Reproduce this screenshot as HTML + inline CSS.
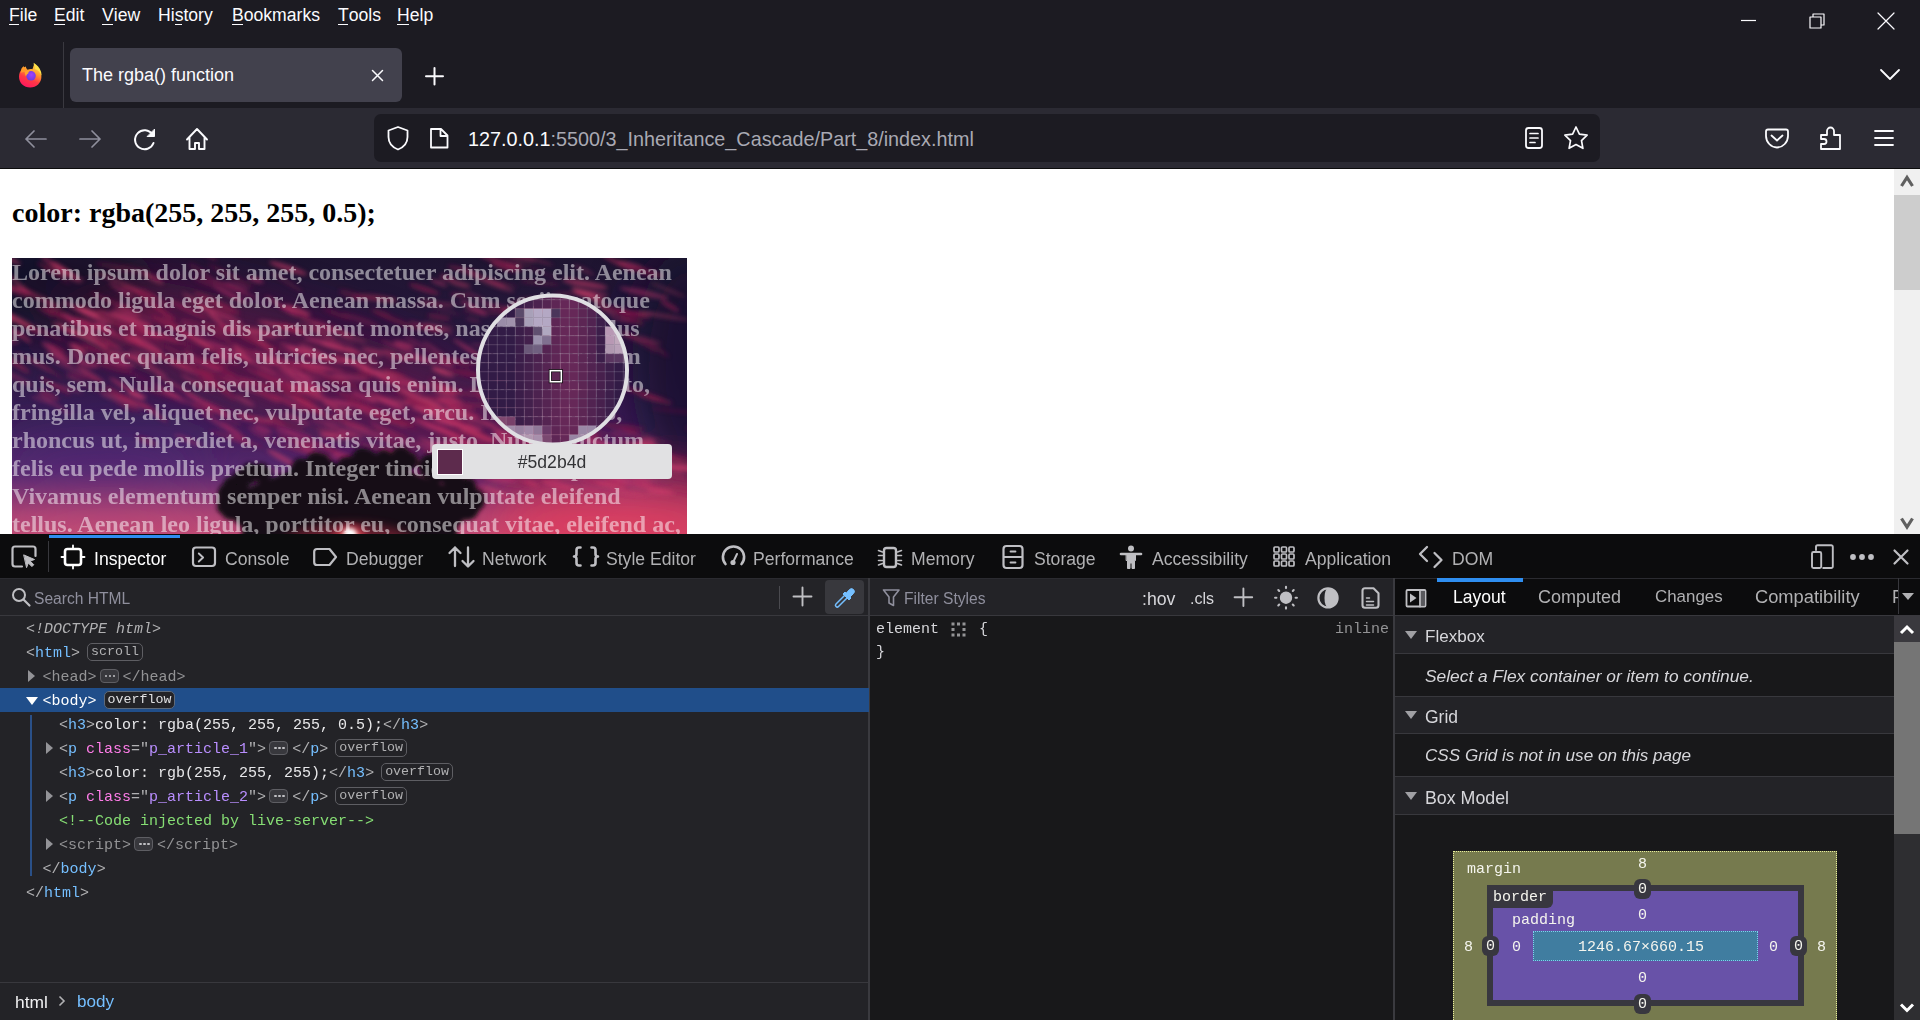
<!DOCTYPE html>
<html><head><meta charset="utf-8">
<style>
*{box-sizing:border-box;margin:0;padding:0}
html,body{width:1920px;height:1020px;overflow:hidden;background:#1c1b22;font-family:"Liberation Sans",sans-serif}
.a{position:absolute}
svg{position:absolute;overflow:visible}
.menu span{position:absolute;top:4px;font-size:17.6px;color:#fbfbfe;line-height:22px}
.menu u{text-decoration:none;position:relative}
.menu u:after{content:"";position:absolute;left:0;right:1px;top:18.5px;height:1px;background:#fbfbfe}
.tabs span{position:absolute;top:548px;font-size:17.6px;line-height:22px;color:#b1b1b3;white-space:nowrap}
.mk{position:absolute;font-family:"Liberation Mono",monospace;font-size:15px;line-height:24px;color:#b1b1b3;white-space:pre}
.tg{color:#75bfff}.at{color:#ff7de9}.av{color:#b98eff}.cm{color:#86de74}.dim{color:#939395}
.bdg{display:inline-block;position:relative;top:-1px;font-size:13.3px;line-height:16px;padding:0 3px;border:1px solid #5e5e63;border-radius:5px;background:#232327;color:#b1b1b3;margin-left:7px;vertical-align:middle}
.ell{display:inline-block;position:relative;width:19px;height:14px;border:1px solid #5e5e63;background:#38383d;border-radius:4px;vertical-align:middle;top:-1px;margin:0 4px 0 3px}
.ell:before{content:"";position:absolute;left:4px;top:4.5px;width:2.5px;height:2.5px;border-radius:50%;background:#c0c0c4;box-shadow:4px 0 0 #c0c0c4,8px 0 0 #c0c0c4}
.tri{position:absolute;width:0;height:0;border-top:6.5px solid transparent;border-bottom:6.5px solid transparent;border-left:7.5px solid #939397}
.trid{position:absolute;width:0;height:0;border-left:6px solid transparent;border-right:6px solid transparent;border-top:8px solid #fff}
.sec{left:1395px;width:499px;background:#232327}
.bm{position:absolute;font-family:"Liberation Mono",monospace;font-size:15px;line-height:22px;color:#f5f5ee;white-space:pre}
.bmb{position:absolute;font-family:"Liberation Mono",monospace;font-size:15px;line-height:22px;height:20px;overflow:hidden;color:#f5f5ee;background:#38373f;border-radius:6px;width:17px;text-align:center}
.mono{font-family:"Liberation Mono",monospace}
</style></head><body>
<!-- menu bar -->
<div class="a" style="left:0;top:0;width:1920px;height:108px;background:#1c1b22"></div>
<svg style="left:14px;top:59px" width="32" height="32" viewBox="0 0 32 32">
 <defs>
  <linearGradient id="ffr" x1="0.35" y1="1" x2="0.75" y2="0.05"><stop offset="0" stop-color="#ff1660"/><stop offset="0.35" stop-color="#ff3a44"/><stop offset="0.65" stop-color="#ff9a30"/><stop offset="1" stop-color="#ffe14a"/></linearGradient>
  <radialGradient id="ffp" cx="0.55" cy="0.4" r="0.6"><stop offset="0" stop-color="#a040ff"/><stop offset="1" stop-color="#6a3ce0"/></radialGradient>
 </defs>
 <path d="M16.2 6.5c-6.2 0-11.2 5-11.2 11.2s5 10.8 11.2 10.8s11.2-4.8 11.2-10.8c0-3.5-1.4-6.6-3.7-8.7c-1-2-2.3-3.5-4.3-5.2c0.3 1.5 0.2 2.6-0.2 3.3c-1-0.4-2-0.6-3-0.6z" fill="url(#ffr)"/>
 <path d="M19.5 3.8c3.5 2 6.4 5.2 7.6 9.2c0.4 1.3 0.4 2.6 0.3 3.8c-1-3.2-3.3-5.8-6.4-6.8c0.5-2.2-0.2-4.3-1.5-6.2z" fill="#ffe24a"/>
 <path d="M7.5 9.5c0.8-1.2 1.6-2 2.4-2.3c0 1 0.4 1.8 1.1 2.4c1.2-0.3 2.4-0.2 3.4 0.2c-2 0.8-3 2-3.4 3.4c-1.5-0.2-2.8 0-3.8 0.5c-0.3-1.4-0.2-2.9 0.3-4.2z" fill="#ff9a2a"/>
 <path d="M11.5 4.5L19.2 3.6c0.6 2 0.6 4.2-0.8 6.6c-1.6-0.3-3.4-0.2-4.8 0.6c-0.6-0.6-1.3-1.4-1.6-2.4z" fill="#1c1b22"/>
 <circle cx="17" cy="16.8" r="4.8" fill="url(#ffp)"/>
 <path d="M10.8 12.5c1.5-1.2 3.6-1.6 5.5-1.1c-1.4 0.8-2 1.8-2 3c-1.3 0.5-2 1.5-2.2 3c-0.8-1.2-1.4-3-1.3-4.9z" fill="#ffa52e"/>
</svg>
<div class="menu">
<span style="left:9px"><u>F</u>ile</span>
<span style="left:54px"><u>E</u>dit</span>
<span style="left:102px"><u>V</u>iew</span>
<span style="left:158px">Hi<u>s</u>tory</span>
<span style="left:232px"><u>B</u>ookmarks</span>
<span style="left:338px"><u>T</u>ools</span>
<span style="left:397px"><u>H</u>elp</span>
</div>
<!-- nav bar -->
<div class="a" style="left:0;top:108px;width:1920px;height:60px;background:#2b2a33"></div>
<div class="a" style="left:0;top:168px;width:1920px;height:1px;background:#0c0c0d"></div>
<!-- url field -->
<div class="a" style="left:374px;top:114px;width:1226px;height:48px;background:#1c1b22;border-radius:7px"></div>
<!-- tab -->
<div class="a" style="left:63px;top:42px;width:1px;height:66px;background:#3a3940"></div>
<div class="a" style="left:70px;top:48px;width:332px;height:54px;background:#42414d;border-radius:6px"></div>
<div class="a" style="left:82px;top:64px;font-size:18px;color:#fbfbfe;line-height:22px">The rgba() function</div>
<svg style="left:0;top:0" width="1920" height="168" fill="none" stroke="#fbfbfe" stroke-width="1.6" stroke-linecap="round" stroke-linejoin="round">
 <!-- tab close -->
 <path d="M372.5 70.5L382.5 80.5M382.5 70.5L372.5 80.5" stroke-width="1.5"/>
 <!-- new tab plus -->
 <path d="M434.5 68v16.5M426 76.2h17" stroke-width="2"/>
 <!-- window controls -->
 <path d="M1741 20.5h15" stroke-width="1.2" stroke-linecap="butt"/>
 <path d="M1810 17h11v11h-11zM1813 17v-3h11v11h-3" stroke-width="1.2" stroke-linecap="butt"/>
 <path d="M1878 13l16 16M1894 13l-16 16" stroke-width="1.2"/>
 <!-- tab overflow chevron -->
 <path d="M1881 70l9 9l9-9" stroke-width="1.8"/>
 <!-- back / forward -->
 <path d="M46 139H26M34 131l-8 8l8 8" stroke="#8f8f9d" stroke-width="1.7"/>
 <path d="M80 139h20M92 131l8 8l-8 8" stroke="#8f8f9d" stroke-width="1.7"/>
 <!-- reload -->
 <path d="M152.5 134.5A9.5 9.5 0 1 0 153.5 143" stroke-width="2"/>
 <path d="M154.5 129.5v7h-7z" fill="#fbfbfe" stroke-width="1"/>
 <!-- home -->
 <path d="M187 139.5L197 129l10 10.5M189.5 137v12h5.5v-6h4v6h5.5v-12" stroke-width="1.9"/>
 <!-- shield -->
 <path d="M398 127l9.5 3.5v6.5c0 6.5-4.5 10.5-9.5 12.5c-5-2-9.5-6-9.5-12.5v-6.5z" stroke-width="1.8"/>
 <!-- page icon -->
 <path d="M431 129h10l6.5 6.5v12h-16.5zM440.5 129v7h7" stroke-width="1.8"/>
 <!-- reader -->
 <rect x="1526" y="128" width="16" height="20" rx="2.5" stroke-width="1.8"/><path d="M1530 133.5h8M1530 138h8M1530 142.5h5" stroke-width="1.7"/>
 <!-- star -->
 <path d="M1576 127l3.4 7.2l7.7 1l-5.6 5.4l1.4 7.7l-6.9-3.8l-6.9 3.8l1.4-7.7l-5.6-5.4l7.7-1z" stroke-width="1.7"/>
 <!-- pocket -->
 <path d="M1766 131.5q0-2 2-2h18q2 0 2 2v4.5c0 6-5 11.5-11 11.5s-11-5.5-11-11.5z" stroke-width="1.8"/>
 <path d="M1771.5 135.5l5.5 5l5.5-5" stroke-width="1.8"/>
 <!-- extensions -->
 <path d="M1821 135h6v-4a3.5 3.5 0 0 1 7 0v4h6v14h-19v-5h3a2.5 2.5 0 0 0 0-5h-3z" stroke-width="1.8"/>
 <!-- hamburger -->
 <path d="M1875 131h18M1875 138h18M1875 145h18" stroke-width="1.8"/>
</svg>
<div class="a" style="left:468px;top:127px;font-size:19.8px;line-height:24px;color:#fbfbfe;white-space:nowrap">127.0.0.1<span style="color:#a9a9b3">:5500/3_Inheritance_Cascade/Part_8/index.html</span></div>
<!-- page -->
<div class="a" style="left:0;top:169px;width:1894px;height:365px;background:#fff;overflow:hidden" id="page">
<div class="a" style="left:12px;top:28px;font-family:'Liberation Serif',serif;font-weight:bold;font-size:28px;line-height:32px;color:#000;white-space:nowrap">color: rgba(255, 255, 255, 0.5);</div>
<div class="a" id="photo" style="left:12px;top:89px;width:675px;height:300px;overflow:hidden;background:#3a1d50">
<svg width="675" height="300" style="left:0;top:0">
 <defs>
  <linearGradient id="sky" x1="0" y1="0" x2="0" y2="1">
   <stop offset="0" stop-color="#1e1430"/>
   <stop offset="0.3" stop-color="#2a1840"/>
   <stop offset="0.55" stop-color="#3a1f58"/>
   <stop offset="0.72" stop-color="#5a2a70"/>
   <stop offset="0.86" stop-color="#a84274"/>
   <stop offset="1" stop-color="#d25272"/>
  </linearGradient>
  <filter id="bl5" x="-50%" y="-50%" width="200%" height="200%"><feGaussianBlur stdDeviation="5"/></filter>
  <filter id="bl3" x="-50%" y="-50%" width="200%" height="200%"><feGaussianBlur stdDeviation="3"/></filter>
  <filter id="bl2" x="-50%" y="-50%" width="200%" height="200%"><feGaussianBlur stdDeviation="2"/></filter>
  <filter id="bl20" x="-50%" y="-50%" width="200%" height="200%"><feGaussianBlur stdDeviation="25"/></filter>
  <radialGradient id="sun"><stop offset="0" stop-color="#fff"/><stop offset="0.2" stop-color="#ffe8d0"/><stop offset="0.5" stop-color="#ff6060" stop-opacity="0.7"/><stop offset="1" stop-color="#e03050" stop-opacity="0"/></radialGradient>
 </defs>
 <rect width="675" height="300" fill="url(#sky)"/>
 <g filter="url(#bl20)">
  <ellipse cx="300" cy="120" rx="300" ry="55" fill="#6a1848" opacity="0.6" transform="rotate(18 300 120)"/>
  <ellipse cx="680" cy="110" rx="60" ry="120" fill="#161230" opacity="0.85"/>
  <ellipse cx="20" cy="20" rx="120" ry="50" fill="#140e26" opacity="0.8"/>
  <ellipse cx="90" cy="205" rx="110" ry="28" fill="#4a2a7a" opacity="0.55"/>
  <ellipse cx="600" cy="268" rx="130" ry="38" fill="#e43c5c" opacity="0.85"/>
  <ellipse cx="100" cy="275" rx="120" ry="25" fill="#d05078" opacity="0.5"/>
 </g>
 <g filter="url(#bl2)"><ellipse cx="142" cy="47" rx="26" ry="2.7" fill="#9a1e50" opacity="0.57" transform="rotate(38 142 47)"/><ellipse cx="370" cy="160" rx="27" ry="1.4" fill="#e0446e" opacity="0.52" transform="rotate(20 370 160)"/><ellipse cx="687" cy="209" rx="23" ry="1.6" fill="#d03a6a" opacity="0.43" transform="rotate(12 687 209)"/><ellipse cx="257" cy="74" rx="19" ry="1.9" fill="#d03a6a" opacity="0.41" transform="rotate(14 257 74)"/><ellipse cx="205" cy="109" rx="22" ry="3.5" fill="#9a1e50" opacity="0.41" transform="rotate(27 205 109)"/><ellipse cx="377" cy="173" rx="20" ry="2.5" fill="#8a1848" opacity="0.28" transform="rotate(16 377 173)"/><ellipse cx="99" cy="95" rx="21" ry="1.8" fill="#b02858" opacity="0.57" transform="rotate(36 99 95)"/><ellipse cx="407" cy="206" rx="16" ry="1.8" fill="#b02858" opacity="0.30" transform="rotate(21 407 206)"/><ellipse cx="328" cy="195" rx="16" ry="1.7" fill="#9a1e50" opacity="0.54" transform="rotate(21 328 195)"/><ellipse cx="448" cy="26" rx="11" ry="2.7" fill="#e0446e" opacity="0.40" transform="rotate(15 448 26)"/><ellipse cx="675" cy="210" rx="11" ry="2.1" fill="#d03a6a" opacity="0.40" transform="rotate(10 675 210)"/><ellipse cx="166" cy="70" rx="22" ry="3.0" fill="#b02858" opacity="0.29" transform="rotate(33 166 70)"/><ellipse cx="40" cy="13" rx="17" ry="1.6" fill="#9a1e50" opacity="0.46" transform="rotate(27 40 13)"/><ellipse cx="64" cy="122" rx="11" ry="1.7" fill="#d03a6a" opacity="0.31" transform="rotate(23 64 122)"/><ellipse cx="521" cy="175" rx="18" ry="2.9" fill="#9a1e50" opacity="0.51" transform="rotate(16 521 175)"/><ellipse cx="-24" cy="104" rx="22" ry="1.9" fill="#e0446e" opacity="0.45" transform="rotate(31 -24 104)"/><ellipse cx="522" cy="50" rx="24" ry="3.1" fill="#d03a6a" opacity="0.56" transform="rotate(11 522 50)"/><ellipse cx="514" cy="227" rx="22" ry="2.5" fill="#8a1848" opacity="0.30" transform="rotate(-5 514 227)"/><ellipse cx="426" cy="70" rx="16" ry="3.2" fill="#e0446e" opacity="0.26" transform="rotate(20 426 70)"/><ellipse cx="573" cy="176" rx="21" ry="2.3" fill="#8a1848" opacity="0.41" transform="rotate(14 573 176)"/><ellipse cx="618" cy="7" rx="14" ry="2.6" fill="#d03a6a" opacity="0.49" transform="rotate(14 618 7)"/><ellipse cx="330" cy="145" rx="10" ry="2.4" fill="#d03a6a" opacity="0.37" transform="rotate(19 330 145)"/><ellipse cx="438" cy="142" rx="13" ry="2.4" fill="#d03a6a" opacity="0.37" transform="rotate(8 438 142)"/><ellipse cx="201" cy="86" rx="19" ry="1.5" fill="#c0346a" opacity="0.45" transform="rotate(17 201 86)"/><ellipse cx="110" cy="10" rx="27" ry="3.3" fill="#8a1848" opacity="0.31" transform="rotate(10 110 10)"/><ellipse cx="427" cy="59" rx="12" ry="3.4" fill="#9a1e50" opacity="0.36" transform="rotate(10 427 59)"/><ellipse cx="436" cy="204" rx="9" ry="2.6" fill="#d03a6a" opacity="0.45" transform="rotate(22 436 204)"/><ellipse cx="488" cy="49" rx="14" ry="2.3" fill="#9a1e50" opacity="0.37" transform="rotate(14 488 49)"/><ellipse cx="268" cy="125" rx="27" ry="3.2" fill="#9a1e50" opacity="0.46" transform="rotate(27 268 125)"/><ellipse cx="338" cy="119" rx="18" ry="2.8" fill="#e0446e" opacity="0.35" transform="rotate(8 338 119)"/><ellipse cx="170" cy="77" rx="9" ry="1.4" fill="#8a1848" opacity="0.27" transform="rotate(15 170 77)"/><ellipse cx="90" cy="133" rx="24" ry="2.2" fill="#9a1e50" opacity="0.28" transform="rotate(17 90 133)"/><ellipse cx="481" cy="168" rx="12" ry="1.4" fill="#c0346a" opacity="0.45" transform="rotate(29 481 168)"/><ellipse cx="438" cy="147" rx="15" ry="2.4" fill="#d03a6a" opacity="0.51" transform="rotate(25 438 147)"/><ellipse cx="545" cy="211" rx="16" ry="3.4" fill="#e0446e" opacity="0.51" transform="rotate(31 545 211)"/><ellipse cx="-22" cy="76" rx="20" ry="3.0" fill="#e0446e" opacity="0.49" transform="rotate(20 -22 76)"/><ellipse cx="182" cy="100" rx="13" ry="2.6" fill="#c0346a" opacity="0.42" transform="rotate(40 182 100)"/><ellipse cx="573" cy="79" rx="20" ry="1.4" fill="#e0446e" opacity="0.49" transform="rotate(23 573 79)"/><ellipse cx="519" cy="42" rx="14" ry="1.7" fill="#e0446e" opacity="0.38" transform="rotate(-2 519 42)"/><ellipse cx="444" cy="179" rx="21" ry="1.9" fill="#d03a6a" opacity="0.52" transform="rotate(34 444 179)"/><ellipse cx="134" cy="107" rx="24" ry="2.0" fill="#d03a6a" opacity="0.51" transform="rotate(29 134 107)"/><ellipse cx="249" cy="86" rx="21" ry="2.6" fill="#8a1848" opacity="0.52" transform="rotate(20 249 86)"/><ellipse cx="309" cy="109" rx="21" ry="1.4" fill="#b02858" opacity="0.41" transform="rotate(11 309 109)"/><ellipse cx="312" cy="85" rx="20" ry="2.8" fill="#c0346a" opacity="0.50" transform="rotate(18 312 85)"/><ellipse cx="557" cy="217" rx="10" ry="2.0" fill="#e0446e" opacity="0.28" transform="rotate(24 557 217)"/><ellipse cx="526" cy="219" rx="20" ry="2.7" fill="#8a1848" opacity="0.31" transform="rotate(4 526 219)"/><ellipse cx="338" cy="165" rx="21" ry="2.1" fill="#b02858" opacity="0.53" transform="rotate(19 338 165)"/><ellipse cx="376" cy="96" rx="27" ry="1.6" fill="#d03a6a" opacity="0.50" transform="rotate(14 376 96)"/><ellipse cx="135" cy="183" rx="12" ry="2.6" fill="#8a1848" opacity="0.49" transform="rotate(22 135 183)"/><ellipse cx="225" cy="28" rx="13" ry="2.8" fill="#c0346a" opacity="0.31" transform="rotate(18 225 28)"/><ellipse cx="6" cy="36" rx="12" ry="1.5" fill="#8a1848" opacity="0.46" transform="rotate(20 6 36)"/><ellipse cx="435" cy="20" rx="8" ry="3.0" fill="#b02858" opacity="0.44" transform="rotate(13 435 20)"/><ellipse cx="-23" cy="64" rx="26" ry="2.1" fill="#d03a6a" opacity="0.25" transform="rotate(26 -23 64)"/><ellipse cx="503" cy="120" rx="21" ry="2.2" fill="#c0346a" opacity="0.26" transform="rotate(11 503 120)"/><ellipse cx="557" cy="175" rx="14" ry="1.5" fill="#e0446e" opacity="0.47" transform="rotate(24 557 175)"/><ellipse cx="582" cy="116" rx="26" ry="2.9" fill="#9a1e50" opacity="0.41" transform="rotate(19 582 116)"/><ellipse cx="195" cy="71" rx="26" ry="2.2" fill="#b02858" opacity="0.30" transform="rotate(24 195 71)"/><ellipse cx="76" cy="80" rx="23" ry="2.8" fill="#e0446e" opacity="0.57" transform="rotate(25 76 80)"/><ellipse cx="94" cy="87" rx="13" ry="1.9" fill="#8a1848" opacity="0.50" transform="rotate(23 94 87)"/><ellipse cx="141" cy="20" rx="12" ry="2.7" fill="#e0446e" opacity="0.41" transform="rotate(28 141 20)"/><ellipse cx="461" cy="62" rx="8" ry="1.5" fill="#d03a6a" opacity="0.28" transform="rotate(12 461 62)"/><ellipse cx="622" cy="55" rx="21" ry="1.8" fill="#b02858" opacity="0.52" transform="rotate(4 622 55)"/><ellipse cx="176" cy="182" rx="15" ry="1.7" fill="#c0346a" opacity="0.48" transform="rotate(23 176 182)"/><ellipse cx="210" cy="157" rx="22" ry="2.6" fill="#b02858" opacity="0.27" transform="rotate(29 210 157)"/><ellipse cx="130" cy="87" rx="25" ry="2.9" fill="#e0446e" opacity="0.25" transform="rotate(31 130 87)"/><ellipse cx="427" cy="210" rx="12" ry="2.9" fill="#d03a6a" opacity="0.57" transform="rotate(15 427 210)"/><ellipse cx="621" cy="213" rx="22" ry="2.4" fill="#b02858" opacity="0.52" transform="rotate(-2 621 213)"/><ellipse cx="643" cy="141" rx="18" ry="2.9" fill="#9a1e50" opacity="0.45" transform="rotate(15 643 141)"/><ellipse cx="296" cy="131" rx="20" ry="2.2" fill="#d03a6a" opacity="0.41" transform="rotate(1 296 131)"/><ellipse cx="166" cy="129" rx="27" ry="1.6" fill="#d03a6a" opacity="0.46" transform="rotate(31 166 129)"/><ellipse cx="383" cy="178" rx="23" ry="2.1" fill="#8a1848" opacity="0.26" transform="rotate(19 383 178)"/><ellipse cx="28" cy="40" rx="25" ry="2.7" fill="#d03a6a" opacity="0.34" transform="rotate(26 28 40)"/><ellipse cx="114" cy="130" rx="20" ry="2.4" fill="#d03a6a" opacity="0.50" transform="rotate(32 114 130)"/><ellipse cx="438" cy="217" rx="19" ry="3.3" fill="#9a1e50" opacity="0.56" transform="rotate(9 438 217)"/><ellipse cx="644" cy="198" rx="9" ry="3.5" fill="#b02858" opacity="0.48" transform="rotate(-4 644 198)"/><ellipse cx="548" cy="48" rx="21" ry="1.9" fill="#e0446e" opacity="0.30" transform="rotate(21 548 48)"/><ellipse cx="141" cy="154" rx="18" ry="1.9" fill="#b02858" opacity="0.57" transform="rotate(35 141 154)"/><ellipse cx="577" cy="104" rx="11" ry="1.7" fill="#8a1848" opacity="0.37" transform="rotate(13 577 104)"/><ellipse cx="447" cy="193" rx="27" ry="3.1" fill="#c0346a" opacity="0.43" transform="rotate(20 447 193)"/><ellipse cx="559" cy="107" rx="23" ry="2.2" fill="#8a1848" opacity="0.44" transform="rotate(15 559 107)"/><ellipse cx="79" cy="117" rx="16" ry="2.3" fill="#d03a6a" opacity="0.50" transform="rotate(32 79 117)"/><ellipse cx="624" cy="186" rx="21" ry="1.4" fill="#e0446e" opacity="0.48" transform="rotate(7 624 186)"/><ellipse cx="166" cy="106" rx="24" ry="3.3" fill="#d03a6a" opacity="0.37" transform="rotate(28 166 106)"/><ellipse cx="110" cy="79" rx="23" ry="1.9" fill="#d03a6a" opacity="0.25" transform="rotate(20 110 79)"/><ellipse cx="437" cy="230" rx="21" ry="2.0" fill="#d03a6a" opacity="0.35" transform="rotate(24 437 230)"/><ellipse cx="138" cy="54" rx="11" ry="2.5" fill="#9a1e50" opacity="0.31" transform="rotate(32 138 54)"/><ellipse cx="335" cy="92" rx="11" ry="2.9" fill="#9a1e50" opacity="0.35" transform="rotate(20 335 92)"/><ellipse cx="264" cy="161" rx="10" ry="2.2" fill="#9a1e50" opacity="0.52" transform="rotate(28 264 161)"/><ellipse cx="648" cy="205" rx="25" ry="3.3" fill="#d03a6a" opacity="0.38" transform="rotate(24 648 205)"/><ellipse cx="573" cy="158" rx="14" ry="1.7" fill="#9a1e50" opacity="0.28" transform="rotate(17 573 158)"/><ellipse cx="412" cy="31" rx="16" ry="2.5" fill="#9a1e50" opacity="0.57" transform="rotate(18 412 31)"/><ellipse cx="550" cy="51" rx="13" ry="2.8" fill="#b02858" opacity="0.24" transform="rotate(5 550 51)"/><ellipse cx="560" cy="163" rx="16" ry="2.6" fill="#9a1e50" opacity="0.42" transform="rotate(5 560 163)"/><ellipse cx="76" cy="54" rx="12" ry="3.3" fill="#e0446e" opacity="0.52" transform="rotate(22 76 54)"/><ellipse cx="120" cy="80" rx="9" ry="1.6" fill="#e0446e" opacity="0.36" transform="rotate(19 120 80)"/><ellipse cx="377" cy="205" rx="20" ry="2.2" fill="#e0446e" opacity="0.44" transform="rotate(10 377 205)"/><ellipse cx="221" cy="125" rx="9" ry="1.4" fill="#d03a6a" opacity="0.29" transform="rotate(22 221 125)"/><ellipse cx="670" cy="230" rx="14" ry="1.3" fill="#b02858" opacity="0.34" transform="rotate(11 670 230)"/><ellipse cx="579" cy="36" rx="17" ry="3.5" fill="#d03a6a" opacity="0.36" transform="rotate(4 579 36)"/><ellipse cx="109" cy="138" rx="20" ry="3.2" fill="#9a1e50" opacity="0.37" transform="rotate(29 109 138)"/><ellipse cx="538" cy="200" rx="28" ry="1.5" fill="#d03a6a" opacity="0.35" transform="rotate(24 538 200)"/><ellipse cx="424" cy="45" rx="19" ry="2.0" fill="#e0446e" opacity="0.25" transform="rotate(12 424 45)"/><ellipse cx="502" cy="8" rx="9" ry="2.7" fill="#d03a6a" opacity="0.29" transform="rotate(9 502 8)"/><ellipse cx="121" cy="99" rx="24" ry="2.8" fill="#d03a6a" opacity="0.45" transform="rotate(12 121 99)"/><ellipse cx="225" cy="181" rx="28" ry="3.0" fill="#9a1e50" opacity="0.34" transform="rotate(17 225 181)"/><ellipse cx="274" cy="166" rx="20" ry="3.0" fill="#8a1848" opacity="0.39" transform="rotate(16 274 166)"/><ellipse cx="196" cy="147" rx="26" ry="2.7" fill="#d03a6a" opacity="0.53" transform="rotate(28 196 147)"/><ellipse cx="165" cy="94" rx="26" ry="1.3" fill="#b02858" opacity="0.36" transform="rotate(25 165 94)"/><ellipse cx="483" cy="25" rx="11" ry="1.4" fill="#b02858" opacity="0.49" transform="rotate(21 483 25)"/><ellipse cx="237" cy="96" rx="25" ry="1.5" fill="#c0346a" opacity="0.32" transform="rotate(20 237 96)"/><ellipse cx="340" cy="218" rx="14" ry="3.2" fill="#b02858" opacity="0.39" transform="rotate(25 340 218)"/><ellipse cx="454" cy="204" rx="27" ry="2.3" fill="#c0346a" opacity="0.49" transform="rotate(23 454 204)"/><ellipse cx="113" cy="148" rx="13" ry="2.7" fill="#8a1848" opacity="0.35" transform="rotate(27 113 148)"/><ellipse cx="1" cy="104" rx="20" ry="3.3" fill="#9a1e50" opacity="0.53" transform="rotate(33 1 104)"/><ellipse cx="563" cy="35" rx="23" ry="1.6" fill="#b02858" opacity="0.38" transform="rotate(-2 563 35)"/><ellipse cx="103" cy="81" rx="16" ry="1.3" fill="#b02858" opacity="0.24" transform="rotate(27 103 81)"/><ellipse cx="479" cy="206" rx="14" ry="3.4" fill="#c0346a" opacity="0.25" transform="rotate(11 479 206)"/><ellipse cx="351" cy="105" rx="12" ry="1.4" fill="#9a1e50" opacity="0.24" transform="rotate(27 351 105)"/><ellipse cx="428" cy="112" rx="9" ry="1.8" fill="#d03a6a" opacity="0.37" transform="rotate(18 428 112)"/><ellipse cx="283" cy="184" rx="19" ry="2.3" fill="#8a1848" opacity="0.58" transform="rotate(21 283 184)"/><ellipse cx="37" cy="137" rx="11" ry="3.4" fill="#b02858" opacity="0.44" transform="rotate(24 37 137)"/><ellipse cx="191" cy="151" rx="13" ry="3.3" fill="#9a1e50" opacity="0.44" transform="rotate(27 191 151)"/><ellipse cx="293" cy="110" rx="22" ry="2.7" fill="#8a1848" opacity="0.57" transform="rotate(13 293 110)"/><ellipse cx="611" cy="209" rx="12" ry="2.0" fill="#9a1e50" opacity="0.52" transform="rotate(15 611 209)"/><ellipse cx="197" cy="89" rx="19" ry="2.2" fill="#b02858" opacity="0.46" transform="rotate(22 197 89)"/><ellipse cx="251" cy="171" rx="10" ry="2.7" fill="#c0346a" opacity="0.45" transform="rotate(22 251 171)"/><ellipse cx="581" cy="192" rx="13" ry="2.0" fill="#d03a6a" opacity="0.52" transform="rotate(3 581 192)"/><ellipse cx="224" cy="74" rx="25" ry="1.4" fill="#b02858" opacity="0.26" transform="rotate(27 224 74)"/><ellipse cx="112" cy="141" rx="22" ry="3.2" fill="#9a1e50" opacity="0.30" transform="rotate(38 112 141)"/><ellipse cx="482" cy="211" rx="9" ry="2.2" fill="#c0346a" opacity="0.26" transform="rotate(27 482 211)"/><ellipse cx="44" cy="8" rx="18" ry="3.1" fill="#b02858" opacity="0.52" transform="rotate(32 44 8)"/><ellipse cx="429" cy="153" rx="15" ry="3.1" fill="#d03a6a" opacity="0.52" transform="rotate(17 429 153)"/><ellipse cx="682" cy="-4" rx="27" ry="1.9" fill="#8a1848" opacity="0.57" transform="rotate(15 682 -4)"/><ellipse cx="536" cy="175" rx="26" ry="2.7" fill="#b02858" opacity="0.47" transform="rotate(8 536 175)"/><ellipse cx="696" cy="227" rx="12" ry="1.5" fill="#8a1848" opacity="0.36" transform="rotate(11 696 227)"/><ellipse cx="491" cy="179" rx="11" ry="3.2" fill="#c0346a" opacity="0.57" transform="rotate(27 491 179)"/><ellipse cx="42" cy="15" rx="20" ry="2.1" fill="#8a1848" opacity="0.29" transform="rotate(35 42 15)"/><ellipse cx="634" cy="183" rx="10" ry="3.4" fill="#d03a6a" opacity="0.54" transform="rotate(5 634 183)"/><ellipse cx="521" cy="52" rx="23" ry="3.3" fill="#e0446e" opacity="0.28" transform="rotate(3 521 52)"/><ellipse cx="93" cy="70" rx="12" ry="3.3" fill="#c0346a" opacity="0.47" transform="rotate(23 93 70)"/><ellipse cx="68" cy="89" rx="15" ry="2.3" fill="#8a1848" opacity="0.38" transform="rotate(18 68 89)"/><ellipse cx="576" cy="37" rx="18" ry="3.5" fill="#e0446e" opacity="0.51" transform="rotate(23 576 37)"/><ellipse cx="593" cy="51" rx="13" ry="2.7" fill="#e0446e" opacity="0.35" transform="rotate(34 593 51)"/><ellipse cx="629" cy="135" rx="24" ry="2.6" fill="#8a1848" opacity="0.55" transform="rotate(17 629 135)"/><ellipse cx="389" cy="126" rx="27" ry="3.5" fill="#c0346a" opacity="0.28" transform="rotate(18 389 126)"/><ellipse cx="611" cy="169" rx="22" ry="3.2" fill="#8a1848" opacity="0.48" transform="rotate(6 611 169)"/><ellipse cx="529" cy="174" rx="8" ry="2.4" fill="#8a1848" opacity="0.30" transform="rotate(14 529 174)"/><ellipse cx="641" cy="180" rx="19" ry="1.4" fill="#b02858" opacity="0.36" transform="rotate(18 641 180)"/><ellipse cx="508" cy="171" rx="26" ry="2.2" fill="#8a1848" opacity="0.41" transform="rotate(17 508 171)"/><ellipse cx="4" cy="31" rx="15" ry="2.6" fill="#d03a6a" opacity="0.55" transform="rotate(17 4 31)"/><ellipse cx="352" cy="139" rx="14" ry="3.1" fill="#c0346a" opacity="0.45" transform="rotate(23 352 139)"/><ellipse cx="199" cy="109" rx="11" ry="2.5" fill="#c0346a" opacity="0.50" transform="rotate(22 199 109)"/><ellipse cx="75" cy="65" rx="20" ry="3.2" fill="#9a1e50" opacity="0.58" transform="rotate(16 75 65)"/><ellipse cx="517" cy="145" rx="11" ry="1.7" fill="#8a1848" opacity="0.28" transform="rotate(19 517 145)"/><ellipse cx="500" cy="177" rx="21" ry="3.5" fill="#e0446e" opacity="0.25" transform="rotate(16 500 177)"/><ellipse cx="424" cy="187" rx="20" ry="1.8" fill="#e0446e" opacity="0.39" transform="rotate(24 424 187)"/><ellipse cx="241" cy="73" rx="25" ry="2.2" fill="#e0446e" opacity="0.48" transform="rotate(17 241 73)"/><ellipse cx="118" cy="114" rx="26" ry="1.5" fill="#9a1e50" opacity="0.33" transform="rotate(28 118 114)"/><ellipse cx="47" cy="57" rx="18" ry="3.1" fill="#8a1848" opacity="0.58" transform="rotate(24 47 57)"/><ellipse cx="205" cy="45" rx="26" ry="3.3" fill="#9a1e50" opacity="0.50" transform="rotate(25 205 45)"/><ellipse cx="479" cy="97" rx="9" ry="1.9" fill="#d03a6a" opacity="0.47" transform="rotate(13 479 97)"/><ellipse cx="291" cy="133" rx="19" ry="1.9" fill="#d03a6a" opacity="0.52" transform="rotate(24 291 133)"/><ellipse cx="485" cy="206" rx="16" ry="3.3" fill="#c0346a" opacity="0.54" transform="rotate(17 485 206)"/><ellipse cx="57" cy="14" rx="18" ry="1.5" fill="#e0446e" opacity="0.39" transform="rotate(31 57 14)"/><ellipse cx="708" cy="92" rx="20" ry="3.4" fill="#e0446e" opacity="0.53" transform="rotate(2 708 92)"/><ellipse cx="473" cy="54" rx="23" ry="3.3" fill="#8a1848" opacity="0.28" transform="rotate(2 473 54)"/><ellipse cx="106" cy="104" rx="18" ry="3.1" fill="#c0346a" opacity="0.54" transform="rotate(15 106 104)"/><ellipse cx="707" cy="214" rx="20" ry="1.9" fill="#e0446e" opacity="0.37" transform="rotate(10 707 214)"/><ellipse cx="587" cy="174" rx="24" ry="2.6" fill="#8a1848" opacity="0.33" transform="rotate(14 587 174)"/><ellipse cx="418" cy="194" rx="8" ry="2.6" fill="#8a1848" opacity="0.43" transform="rotate(7 418 194)"/><ellipse cx="43" cy="128" rx="18" ry="2.4" fill="#8a1848" opacity="0.55" transform="rotate(29 43 128)"/><ellipse cx="125" cy="137" rx="10" ry="2.8" fill="#e0446e" opacity="0.58" transform="rotate(22 125 137)"/><ellipse cx="279" cy="103" rx="21" ry="1.6" fill="#c0346a" opacity="0.27" transform="rotate(14 279 103)"/><ellipse cx="431" cy="126" rx="16" ry="1.6" fill="#9a1e50" opacity="0.34" transform="rotate(25 431 126)"/><ellipse cx="547" cy="177" rx="10" ry="1.9" fill="#e0446e" opacity="0.57" transform="rotate(21 547 177)"/><ellipse cx="277" cy="145" rx="22" ry="1.8" fill="#b02858" opacity="0.55" transform="rotate(24 277 145)"/><ellipse cx="100" cy="86" rx="12" ry="1.8" fill="#d03a6a" opacity="0.49" transform="rotate(29 100 86)"/><ellipse cx="327" cy="151" rx="17" ry="3.1" fill="#d03a6a" opacity="0.33" transform="rotate(21 327 151)"/><ellipse cx="242" cy="124" rx="17" ry="1.9" fill="#d03a6a" opacity="0.36" transform="rotate(15 242 124)"/><ellipse cx="217" cy="70" rx="11" ry="3.0" fill="#c0346a" opacity="0.42" transform="rotate(21 217 70)"/><ellipse cx="590" cy="214" rx="11" ry="2.3" fill="#b02858" opacity="0.31" transform="rotate(14 590 214)"/><ellipse cx="358" cy="152" rx="26" ry="3.0" fill="#8a1848" opacity="0.39" transform="rotate(20 358 152)"/><ellipse cx="128" cy="73" rx="27" ry="2.5" fill="#9a1e50" opacity="0.57" transform="rotate(19 128 73)"/><ellipse cx="194" cy="130" rx="9" ry="3.1" fill="#9a1e50" opacity="0.26" transform="rotate(19 194 130)"/><ellipse cx="363" cy="40" rx="23" ry="3.3" fill="#b02858" opacity="0.47" transform="rotate(6 363 40)"/><ellipse cx="-10" cy="81" rx="14" ry="1.6" fill="#b02858" opacity="0.43" transform="rotate(36 -10 81)"/><ellipse cx="534" cy="198" rx="26" ry="1.4" fill="#9a1e50" opacity="0.29" transform="rotate(18 534 198)"/><ellipse cx="434" cy="133" rx="11" ry="2.9" fill="#e0446e" opacity="0.43" transform="rotate(21 434 133)"/><ellipse cx="635" cy="189" rx="14" ry="3.5" fill="#e0446e" opacity="0.56" transform="rotate(0 635 189)"/><ellipse cx="495" cy="184" rx="8" ry="2.9" fill="#e0446e" opacity="0.26" transform="rotate(23 495 184)"/><ellipse cx="59" cy="101" rx="24" ry="1.6" fill="#9a1e50" opacity="0.41" transform="rotate(28 59 101)"/><ellipse cx="356" cy="150" rx="23" ry="1.8" fill="#8a1848" opacity="0.49" transform="rotate(23 356 150)"/><ellipse cx="656" cy="32" rx="19" ry="2.1" fill="#d03a6a" opacity="0.24" transform="rotate(22 656 32)"/><ellipse cx="371" cy="115" rx="23" ry="2.1" fill="#e0446e" opacity="0.53" transform="rotate(12 371 115)"/><ellipse cx="349" cy="62" rx="20" ry="3.1" fill="#b02858" opacity="0.26" transform="rotate(19 349 62)"/><ellipse cx="294" cy="120" rx="20" ry="2.2" fill="#c0346a" opacity="0.48" transform="rotate(40 294 120)"/><ellipse cx="534" cy="224" rx="9" ry="1.6" fill="#9a1e50" opacity="0.24" transform="rotate(10 534 224)"/><ellipse cx="505" cy="176" rx="20" ry="1.4" fill="#e0446e" opacity="0.43" transform="rotate(9 505 176)"/><ellipse cx="690" cy="229" rx="14" ry="2.5" fill="#9a1e50" opacity="0.52" transform="rotate(5 690 229)"/><ellipse cx="258" cy="104" rx="9" ry="3.0" fill="#e0446e" opacity="0.43" transform="rotate(15 258 104)"/><ellipse cx="216" cy="102" rx="13" ry="3.2" fill="#9a1e50" opacity="0.32" transform="rotate(25 216 102)"/><ellipse cx="328" cy="90" rx="20" ry="2.3" fill="#e0446e" opacity="0.50" transform="rotate(15 328 90)"/><ellipse cx="353" cy="148" rx="25" ry="3.4" fill="#9a1e50" opacity="0.27" transform="rotate(23 353 148)"/><ellipse cx="545" cy="227" rx="16" ry="3.4" fill="#d03a6a" opacity="0.50" transform="rotate(15 545 227)"/><ellipse cx="320" cy="102" rx="21" ry="2.6" fill="#d03a6a" opacity="0.52" transform="rotate(8 320 102)"/><ellipse cx="84" cy="92" rx="16" ry="2.3" fill="#9a1e50" opacity="0.45" transform="rotate(24 84 92)"/><ellipse cx="391" cy="133" rx="14" ry="2.3" fill="#b02858" opacity="0.26" transform="rotate(27 391 133)"/><ellipse cx="555" cy="128" rx="20" ry="2.8" fill="#b02858" opacity="0.47" transform="rotate(16 555 128)"/><ellipse cx="293" cy="186" rx="12" ry="2.9" fill="#b02858" opacity="0.48" transform="rotate(13 293 186)"/><ellipse cx="574" cy="89" rx="25" ry="3.3" fill="#c0346a" opacity="0.28" transform="rotate(18 574 89)"/><ellipse cx="458" cy="212" rx="16" ry="1.4" fill="#c0346a" opacity="0.31" transform="rotate(7 458 212)"/><ellipse cx="434" cy="106" rx="8" ry="2.7" fill="#e0446e" opacity="0.42" transform="rotate(24 434 106)"/><ellipse cx="705" cy="45" rx="28" ry="1.9" fill="#8a1848" opacity="0.27" transform="rotate(24 705 45)"/><ellipse cx="152" cy="79" rx="17" ry="2.8" fill="#d03a6a" opacity="0.36" transform="rotate(17 152 79)"/><ellipse cx="275" cy="143" rx="20" ry="2.0" fill="#b02858" opacity="0.27" transform="rotate(31 275 143)"/><ellipse cx="-16" cy="75" rx="26" ry="3.5" fill="#c0346a" opacity="0.38" transform="rotate(25 -16 75)"/><ellipse cx="30" cy="142" rx="12" ry="1.4" fill="#c0346a" opacity="0.41" transform="rotate(17 30 142)"/><ellipse cx="228" cy="182" rx="12" ry="2.2" fill="#c0346a" opacity="0.32" transform="rotate(21 228 182)"/><ellipse cx="505" cy="221" rx="18" ry="2.6" fill="#9a1e50" opacity="0.42" transform="rotate(10 505 221)"/><ellipse cx="339" cy="176" rx="13" ry="2.8" fill="#d03a6a" opacity="0.32" transform="rotate(17 339 176)"/><ellipse cx="606" cy="5" rx="18" ry="2.1" fill="#b02858" opacity="0.56" transform="rotate(27 606 5)"/><ellipse cx="351" cy="98" rx="19" ry="2.2" fill="#c0346a" opacity="0.35" transform="rotate(32 351 98)"/><ellipse cx="305" cy="196" rx="17" ry="3.4" fill="#d03a6a" opacity="0.44" transform="rotate(25 305 196)"/><ellipse cx="283" cy="71" rx="15" ry="3.2" fill="#8a1848" opacity="0.53" transform="rotate(22 283 71)"/><ellipse cx="-21" cy="161" rx="14" ry="2.7" fill="#e0446e" opacity="0.41" transform="rotate(36 -21 161)"/><ellipse cx="625" cy="204" rx="22" ry="2.3" fill="#c0346a" opacity="0.35" transform="rotate(18 625 204)"/><ellipse cx="515" cy="209" rx="23" ry="2.3" fill="#d03a6a" opacity="0.50" transform="rotate(14 515 209)"/><ellipse cx="428" cy="226" rx="12" ry="1.7" fill="#d03a6a" opacity="0.25" transform="rotate(20 428 226)"/><ellipse cx="548" cy="140" rx="21" ry="1.5" fill="#b02858" opacity="0.25" transform="rotate(18 548 140)"/><ellipse cx="528" cy="76" rx="24" ry="1.5" fill="#b02858" opacity="0.38" transform="rotate(11 528 76)"/><ellipse cx="99" cy="62" rx="21" ry="2.7" fill="#8a1848" opacity="0.38" transform="rotate(30 99 62)"/><ellipse cx="299" cy="222" rx="10" ry="2.4" fill="#d03a6a" opacity="0.34" transform="rotate(8 299 222)"/><ellipse cx="694" cy="49" rx="20" ry="1.9" fill="#b02858" opacity="0.25" transform="rotate(9 694 49)"/><ellipse cx="329" cy="100" rx="10" ry="2.4" fill="#b02858" opacity="0.48" transform="rotate(18 329 100)"/><ellipse cx="215" cy="-9" rx="25" ry="2.7" fill="#b02858" opacity="0.40" transform="rotate(16 215 -9)"/><ellipse cx="573" cy="191" rx="26" ry="3.3" fill="#9a1e50" opacity="0.25" transform="rotate(26 573 191)"/><ellipse cx="68" cy="92" rx="11" ry="1.4" fill="#e0446e" opacity="0.58" transform="rotate(36 68 92)"/><ellipse cx="470" cy="135" rx="11" ry="1.8" fill="#9a1e50" opacity="0.48" transform="rotate(20 470 135)"/><ellipse cx="204" cy="78" rx="9" ry="1.5" fill="#9a1e50" opacity="0.28" transform="rotate(19 204 78)"/><ellipse cx="590" cy="225" rx="22" ry="3.2" fill="#b02858" opacity="0.54" transform="rotate(8 590 225)"/><ellipse cx="458" cy="208" rx="26" ry="3.0" fill="#c0346a" opacity="0.36" transform="rotate(20 458 208)"/><ellipse cx="379" cy="123" rx="12" ry="1.8" fill="#b02858" opacity="0.24" transform="rotate(17 379 123)"/><ellipse cx="134" cy="97" rx="18" ry="1.9" fill="#d03a6a" opacity="0.37" transform="rotate(17 134 97)"/><ellipse cx="523" cy="138" rx="15" ry="1.7" fill="#b02858" opacity="0.28" transform="rotate(15 523 138)"/><ellipse cx="206" cy="48" rx="21" ry="2.7" fill="#8a1848" opacity="0.44" transform="rotate(21 206 48)"/><ellipse cx="288" cy="93" rx="14" ry="3.3" fill="#d03a6a" opacity="0.51" transform="rotate(19 288 93)"/><ellipse cx="651" cy="203" rx="9" ry="3.1" fill="#c0346a" opacity="0.31" transform="rotate(8 651 203)"/><ellipse cx="449" cy="175" rx="24" ry="3.0" fill="#8a1848" opacity="0.46" transform="rotate(5 449 175)"/><ellipse cx="492" cy="125" rx="12" ry="2.8" fill="#9a1e50" opacity="0.54" transform="rotate(18 492 125)"/><ellipse cx="406" cy="206" rx="10" ry="1.4" fill="#b02858" opacity="0.31" transform="rotate(29 406 206)"/><ellipse cx="246" cy="173" rx="11" ry="3.3" fill="#c0346a" opacity="0.25" transform="rotate(22 246 173)"/><ellipse cx="218" cy="74" rx="25" ry="1.5" fill="#8a1848" opacity="0.36" transform="rotate(14 218 74)"/><ellipse cx="181" cy="71" rx="16" ry="1.7" fill="#c0346a" opacity="0.48" transform="rotate(36 181 71)"/><ellipse cx="296" cy="147" rx="19" ry="3.2" fill="#9a1e50" opacity="0.53" transform="rotate(29 296 147)"/><ellipse cx="61" cy="61" rx="12" ry="1.6" fill="#c0346a" opacity="0.54" transform="rotate(33 61 61)"/><ellipse cx="336" cy="206" rx="26" ry="2.0" fill="#b02858" opacity="0.36" transform="rotate(23 336 206)"/><ellipse cx="303" cy="107" rx="17" ry="2.6" fill="#e0446e" opacity="0.36" transform="rotate(16 303 107)"/><ellipse cx="217" cy="36" rx="19" ry="2.3" fill="#c0346a" opacity="0.54" transform="rotate(27 217 36)"/><ellipse cx="606" cy="195" rx="10" ry="2.1" fill="#d03a6a" opacity="0.25" transform="rotate(28 606 195)"/><ellipse cx="438" cy="195" rx="24" ry="2.2" fill="#9a1e50" opacity="0.28" transform="rotate(8 438 195)"/><ellipse cx="369" cy="55" rx="11" ry="3.0" fill="#9a1e50" opacity="0.26" transform="rotate(19 369 55)"/><ellipse cx="472" cy="148" rx="24" ry="1.8" fill="#9a1e50" opacity="0.50" transform="rotate(7 472 148)"/><ellipse cx="355" cy="174" rx="26" ry="3.3" fill="#c0346a" opacity="0.40" transform="rotate(18 355 174)"/><ellipse cx="510" cy="61" rx="9" ry="2.9" fill="#9a1e50" opacity="0.25" transform="rotate(11 510 61)"/><ellipse cx="606" cy="226" rx="13" ry="2.5" fill="#9a1e50" opacity="0.52" transform="rotate(21 606 226)"/><ellipse cx="577" cy="175" rx="11" ry="3.0" fill="#b02858" opacity="0.46" transform="rotate(17 577 175)"/><ellipse cx="235" cy="124" rx="28" ry="3.2" fill="#9a1e50" opacity="0.43" transform="rotate(19 235 124)"/><ellipse cx="575" cy="77" rx="9" ry="3.5" fill="#c0346a" opacity="0.27" transform="rotate(13 575 77)"/><ellipse cx="276" cy="10" rx="20" ry="3.0" fill="#d03a6a" opacity="0.55" transform="rotate(19 276 10)"/><ellipse cx="447" cy="167" rx="24" ry="2.4" fill="#c0346a" opacity="0.53" transform="rotate(11 447 167)"/><ellipse cx="120" cy="61" rx="23" ry="3.2" fill="#d03a6a" opacity="0.54" transform="rotate(20 120 61)"/><ellipse cx="-11" cy="67" rx="25" ry="3.3" fill="#d03a6a" opacity="0.26" transform="rotate(27 -11 67)"/><ellipse cx="580" cy="232" rx="11" ry="1.7" fill="#c0346a" opacity="0.31" transform="rotate(27 580 232)"/><ellipse cx="547" cy="108" rx="10" ry="3.5" fill="#e0446e" opacity="0.43" transform="rotate(18 547 108)"/><ellipse cx="591" cy="210" rx="11" ry="2.2" fill="#9a1e50" opacity="0.46" transform="rotate(5 591 210)"/><ellipse cx="251" cy="96" rx="21" ry="2.4" fill="#9a1e50" opacity="0.33" transform="rotate(13 251 96)"/><ellipse cx="220" cy="30" rx="27" ry="2.1" fill="#c0346a" opacity="0.35" transform="rotate(23 220 30)"/><ellipse cx="270" cy="131" rx="10" ry="1.9" fill="#b02858" opacity="0.33" transform="rotate(19 270 131)"/><ellipse cx="209" cy="150" rx="24" ry="2.0" fill="#8a1848" opacity="0.29" transform="rotate(20 209 150)"/><ellipse cx="573" cy="26" rx="23" ry="3.2" fill="#d03a6a" opacity="0.53" transform="rotate(10 573 26)"/><ellipse cx="702" cy="174" rx="17" ry="1.8" fill="#b02858" opacity="0.44" transform="rotate(10 702 174)"/><ellipse cx="393" cy="120" rx="23" ry="1.5" fill="#b02858" opacity="0.54" transform="rotate(25 393 120)"/><ellipse cx="132" cy="87" rx="20" ry="1.6" fill="#9a1e50" opacity="0.37" transform="rotate(15 132 87)"/><ellipse cx="213" cy="28" rx="24" ry="1.7" fill="#8a1848" opacity="0.37" transform="rotate(18 213 28)"/><ellipse cx="682" cy="204" rx="18" ry="1.6" fill="#9a1e50" opacity="0.40" transform="rotate(18 682 204)"/><ellipse cx="388" cy="123" rx="27" ry="1.5" fill="#e0446e" opacity="0.40" transform="rotate(16 388 123)"/><ellipse cx="45" cy="90" rx="10" ry="2.4" fill="#8a1848" opacity="0.53" transform="rotate(26 45 90)"/><ellipse cx="537" cy="74" rx="19" ry="1.6" fill="#8a1848" opacity="0.52" transform="rotate(8 537 74)"/><ellipse cx="648" cy="234" rx="13" ry="2.5" fill="#e0446e" opacity="0.39" transform="rotate(1 648 234)"/><ellipse cx="178" cy="104" rx="8" ry="3.5" fill="#c0346a" opacity="0.24" transform="rotate(26 178 104)"/><ellipse cx="304" cy="153" rx="22" ry="2.4" fill="#9a1e50" opacity="0.37" transform="rotate(27 304 153)"/><ellipse cx="458" cy="116" rx="21" ry="3.2" fill="#8a1848" opacity="0.57" transform="rotate(11 458 116)"/><ellipse cx="658" cy="48" rx="11" ry="2.4" fill="#9a1e50" opacity="0.58" transform="rotate(31 658 48)"/><ellipse cx="10" cy="78" rx="11" ry="3.1" fill="#d03a6a" opacity="0.37" transform="rotate(34 10 78)"/><ellipse cx="29" cy="73" rx="26" ry="3.2" fill="#8a1848" opacity="0.35" transform="rotate(23 29 73)"/><ellipse cx="418" cy="212" rx="14" ry="1.4" fill="#c0346a" opacity="0.35" transform="rotate(16 418 212)"/><ellipse cx="501" cy="53" rx="10" ry="3.1" fill="#c0346a" opacity="0.56" transform="rotate(14 501 53)"/><ellipse cx="325" cy="56" rx="15" ry="1.9" fill="#8a1848" opacity="0.48" transform="rotate(21 325 56)"/><ellipse cx="693" cy="189" rx="17" ry="1.7" fill="#b02858" opacity="0.57" transform="rotate(25 693 189)"/><ellipse cx="156" cy="65" rx="19" ry="3.3" fill="#9a1e50" opacity="0.32" transform="rotate(25 156 65)"/><ellipse cx="41" cy="50" rx="14" ry="2.7" fill="#8a1848" opacity="0.33" transform="rotate(41 41 50)"/><ellipse cx="207" cy="103" rx="11" ry="3.2" fill="#b02858" opacity="0.25" transform="rotate(17 207 103)"/><ellipse cx="484" cy="234" rx="16" ry="2.1" fill="#e0446e" opacity="0.45" transform="rotate(25 484 234)"/><ellipse cx="-10" cy="55" rx="11" ry="2.7" fill="#e0446e" opacity="0.54" transform="rotate(32 -10 55)"/><ellipse cx="488" cy="146" rx="16" ry="3.3" fill="#9a1e50" opacity="0.45" transform="rotate(24 488 146)"/><ellipse cx="197" cy="51" rx="26" ry="1.6" fill="#8a1848" opacity="0.50" transform="rotate(16 197 51)"/><ellipse cx="42" cy="146" rx="21" ry="1.6" fill="#c0346a" opacity="0.42" transform="rotate(32 42 146)"/><ellipse cx="287" cy="116" rx="24" ry="2.1" fill="#e0446e" opacity="0.37" transform="rotate(14 287 116)"/><ellipse cx="510" cy="190" rx="26" ry="2.6" fill="#d03a6a" opacity="0.53" transform="rotate(12 510 190)"/><ellipse cx="408" cy="140" rx="26" ry="2.8" fill="#e0446e" opacity="0.54" transform="rotate(23 408 140)"/><ellipse cx="373" cy="154" rx="17" ry="2.5" fill="#c0346a" opacity="0.26" transform="rotate(8 373 154)"/><ellipse cx="447" cy="103" rx="23" ry="3.0" fill="#9a1e50" opacity="0.35" transform="rotate(10 447 103)"/><ellipse cx="166" cy="106" rx="16" ry="1.6" fill="#b02858" opacity="0.57" transform="rotate(25 166 106)"/><ellipse cx="389" cy="199" rx="20" ry="3.3" fill="#b02858" opacity="0.48" transform="rotate(13 389 199)"/><ellipse cx="123" cy="85" rx="11" ry="3.2" fill="#b02858" opacity="0.26" transform="rotate(19 123 85)"/><ellipse cx="-26" cy="103" rx="26" ry="1.5" fill="#9a1e50" opacity="0.36" transform="rotate(30 -26 103)"/><ellipse cx="159" cy="81" rx="27" ry="2.0" fill="#9a1e50" opacity="0.38" transform="rotate(20 159 81)"/><ellipse cx="552" cy="162" rx="26" ry="2.4" fill="#c0346a" opacity="0.53" transform="rotate(16 552 162)"/><ellipse cx="233" cy="143" rx="11" ry="2.6" fill="#e0446e" opacity="0.35" transform="rotate(27 233 143)"/><ellipse cx="226" cy="88" rx="17" ry="1.8" fill="#9a1e50" opacity="0.38" transform="rotate(23 226 88)"/><ellipse cx="373" cy="142" rx="26" ry="1.5" fill="#d03a6a" opacity="0.41" transform="rotate(30 373 142)"/><ellipse cx="250" cy="109" rx="17" ry="3.0" fill="#e0446e" opacity="0.25" transform="rotate(24 250 109)"/><ellipse cx="-3" cy="76" rx="9" ry="2.0" fill="#d03a6a" opacity="0.29" transform="rotate(28 -3 76)"/><ellipse cx="-18" cy="50" rx="9" ry="2.0" fill="#9a1e50" opacity="0.28" transform="rotate(40 -18 50)"/><ellipse cx="152" cy="55" rx="14" ry="1.8" fill="#9a1e50" opacity="0.45" transform="rotate(27 152 55)"/><ellipse cx="381" cy="192" rx="9" ry="1.8" fill="#9a1e50" opacity="0.25" transform="rotate(31 381 192)"/><ellipse cx="309" cy="188" rx="19" ry="3.0" fill="#9a1e50" opacity="0.50" transform="rotate(25 309 188)"/><ellipse cx="423" cy="92" rx="15" ry="2.1" fill="#e0446e" opacity="0.29" transform="rotate(36 423 92)"/><ellipse cx="1" cy="21" rx="23" ry="1.8" fill="#e0446e" opacity="0.42" transform="rotate(40 1 21)"/><ellipse cx="360" cy="227" rx="16" ry="2.2" fill="#9a1e50" opacity="0.55" transform="rotate(25 360 227)"/><ellipse cx="391" cy="165" rx="15" ry="1.8" fill="#8a1848" opacity="0.47" transform="rotate(22 391 165)"/><ellipse cx="557" cy="132" rx="9" ry="2.9" fill="#b02858" opacity="0.36" transform="rotate(24 557 132)"/><ellipse cx="446" cy="202" rx="14" ry="3.0" fill="#c0346a" opacity="0.56" transform="rotate(19 446 202)"/><ellipse cx="-14" cy="54" rx="19" ry="2.4" fill="#9a1e50" opacity="0.27" transform="rotate(28 -14 54)"/><ellipse cx="534" cy="153" rx="23" ry="2.3" fill="#8a1848" opacity="0.50" transform="rotate(30 534 153)"/><ellipse cx="429" cy="161" rx="22" ry="1.5" fill="#e0446e" opacity="0.49" transform="rotate(20 429 161)"/><ellipse cx="206" cy="71" rx="17" ry="2.4" fill="#9a1e50" opacity="0.49" transform="rotate(23 206 71)"/><ellipse cx="441" cy="162" rx="22" ry="2.2" fill="#9a1e50" opacity="0.42" transform="rotate(15 441 162)"/><ellipse cx="489" cy="4" rx="23" ry="3.3" fill="#9a1e50" opacity="0.53" transform="rotate(19 489 4)"/><ellipse cx="385" cy="63" rx="25" ry="2.5" fill="#8a1848" opacity="0.48" transform="rotate(22 385 63)"/><ellipse cx="196" cy="124" rx="13" ry="2.4" fill="#b02858" opacity="0.27" transform="rotate(19 196 124)"/><ellipse cx="528" cy="-8" rx="11" ry="2.1" fill="#8a1848" opacity="0.33" transform="rotate(26 528 -8)"/><ellipse cx="618" cy="173" rx="9" ry="1.9" fill="#8a1848" opacity="0.46" transform="rotate(23 618 173)"/><ellipse cx="-3" cy="58" rx="25" ry="3.0" fill="#e0446e" opacity="0.55" transform="rotate(28 -3 58)"/><ellipse cx="614" cy="54" rx="26" ry="2.6" fill="#8a1848" opacity="0.55" transform="rotate(16 614 54)"/><ellipse cx="543" cy="189" rx="28" ry="3.0" fill="#d03a6a" opacity="0.54" transform="rotate(11 543 189)"/><ellipse cx="315" cy="177" rx="9" ry="2.9" fill="#e0446e" opacity="0.25" transform="rotate(12 315 177)"/><ellipse cx="461" cy="94" rx="24" ry="2.2" fill="#c0346a" opacity="0.56" transform="rotate(33 461 94)"/><ellipse cx="293" cy="126" rx="21" ry="1.9" fill="#e0446e" opacity="0.40" transform="rotate(32 293 126)"/><ellipse cx="264" cy="214" rx="15" ry="1.6" fill="#b02858" opacity="0.29" transform="rotate(17 264 214)"/><ellipse cx="516" cy="166" rx="10" ry="1.4" fill="#d03a6a" opacity="0.37" transform="rotate(10 516 166)"/><ellipse cx="654" cy="199" rx="24" ry="3.4" fill="#8a1848" opacity="0.27" transform="rotate(3 654 199)"/><ellipse cx="421" cy="219" rx="23" ry="1.6" fill="#d03a6a" opacity="0.35" transform="rotate(23 421 219)"/><ellipse cx="193" cy="118" rx="16" ry="2.5" fill="#9a1e50" opacity="0.43" transform="rotate(31 193 118)"/><ellipse cx="110" cy="33" rx="16" ry="1.9" fill="#c0346a" opacity="0.46" transform="rotate(33 110 33)"/><ellipse cx="522" cy="50" rx="22" ry="2.1" fill="#d03a6a" opacity="0.29" transform="rotate(6 522 50)"/><ellipse cx="385" cy="163" rx="18" ry="3.2" fill="#8a1848" opacity="0.51" transform="rotate(10 385 163)"/><ellipse cx="462" cy="50" rx="15" ry="3.2" fill="#c0346a" opacity="0.45" transform="rotate(30 462 50)"/><ellipse cx="542" cy="80" rx="14" ry="2.6" fill="#8a1848" opacity="0.43" transform="rotate(17 542 80)"/><ellipse cx="428" cy="172" rx="18" ry="2.6" fill="#e0446e" opacity="0.25" transform="rotate(21 428 172)"/><ellipse cx="466" cy="175" rx="12" ry="1.8" fill="#9a1e50" opacity="0.27" transform="rotate(23 466 175)"/><ellipse cx="410" cy="145" rx="17" ry="2.2" fill="#e0446e" opacity="0.47" transform="rotate(14 410 145)"/><ellipse cx="302" cy="70" rx="20" ry="1.4" fill="#b02858" opacity="0.48" transform="rotate(12 302 70)"/><ellipse cx="317" cy="69" rx="24" ry="2.3" fill="#b02858" opacity="0.48" transform="rotate(21 317 69)"/><ellipse cx="405" cy="221" rx="17" ry="3.2" fill="#8a1848" opacity="0.30" transform="rotate(25 405 221)"/><ellipse cx="54" cy="15" rx="18" ry="3.3" fill="#e0446e" opacity="0.37" transform="rotate(32 54 15)"/><ellipse cx="196" cy="115" rx="8" ry="2.6" fill="#9a1e50" opacity="0.49" transform="rotate(26 196 115)"/><ellipse cx="424" cy="168" rx="23" ry="1.9" fill="#9a1e50" opacity="0.55" transform="rotate(24 424 168)"/><ellipse cx="312" cy="226" rx="14" ry="1.5" fill="#e0446e" opacity="0.38" transform="rotate(26 312 226)"/><ellipse cx="454" cy="183" rx="20" ry="2.1" fill="#d03a6a" opacity="0.33" transform="rotate(9 454 183)"/><ellipse cx="445" cy="191" rx="15" ry="2.2" fill="#e0446e" opacity="0.55" transform="rotate(30 445 191)"/><ellipse cx="452" cy="12" rx="17" ry="2.0" fill="#9a1e50" opacity="0.56" transform="rotate(14 452 12)"/><ellipse cx="381" cy="177" rx="28" ry="2.3" fill="#c0346a" opacity="0.35" transform="rotate(31 381 177)"/><ellipse cx="507" cy="0" rx="17" ry="3.1" fill="#d03a6a" opacity="0.26" transform="rotate(12 507 0)"/><ellipse cx="219" cy="94" rx="27" ry="1.9" fill="#c0346a" opacity="0.44" transform="rotate(26 219 94)"/><ellipse cx="193" cy="-4" rx="14" ry="1.5" fill="#b02858" opacity="0.47" transform="rotate(27 193 -4)"/><ellipse cx="474" cy="181" rx="16" ry="3.3" fill="#b02858" opacity="0.27" transform="rotate(26 474 181)"/><ellipse cx="651" cy="195" rx="22" ry="2.8" fill="#b02858" opacity="0.50" transform="rotate(26 651 195)"/><ellipse cx="511" cy="134" rx="25" ry="1.9" fill="#b02858" opacity="0.47" transform="rotate(20 511 134)"/><ellipse cx="134" cy="86" rx="19" ry="3.5" fill="#d03a6a" opacity="0.50" transform="rotate(31 134 86)"/><ellipse cx="345" cy="105" rx="14" ry="1.8" fill="#e0446e" opacity="0.50" transform="rotate(21 345 105)"/><ellipse cx="21" cy="104" rx="22" ry="1.8" fill="#c0346a" opacity="0.38" transform="rotate(29 21 104)"/><ellipse cx="58" cy="72" rx="14" ry="1.8" fill="#e0446e" opacity="0.29" transform="rotate(33 58 72)"/><ellipse cx="688" cy="215" rx="17" ry="1.7" fill="#9a1e50" opacity="0.29" transform="rotate(25 688 215)"/><ellipse cx="243" cy="161" rx="19" ry="2.9" fill="#e0446e" opacity="0.45" transform="rotate(8 243 161)"/><ellipse cx="208" cy="57" rx="24" ry="3.5" fill="#d03a6a" opacity="0.41" transform="rotate(20 208 57)"/><ellipse cx="248" cy="83" rx="19" ry="3.3" fill="#d03a6a" opacity="0.40" transform="rotate(42 248 83)"/><ellipse cx="88" cy="102" rx="12" ry="2.5" fill="#b02858" opacity="0.29" transform="rotate(26 88 102)"/><ellipse cx="486" cy="122" rx="11" ry="3.4" fill="#c0346a" opacity="0.55" transform="rotate(20 486 122)"/><ellipse cx="258" cy="138" rx="12" ry="1.8" fill="#9a1e50" opacity="0.37" transform="rotate(20 258 138)"/><ellipse cx="339" cy="138" rx="15" ry="1.9" fill="#9a1e50" opacity="0.47" transform="rotate(12 339 138)"/><ellipse cx="231" cy="99" rx="18" ry="2.2" fill="#c0346a" opacity="0.36" transform="rotate(15 231 99)"/><ellipse cx="478" cy="24" rx="26" ry="2.9" fill="#e0446e" opacity="0.34" transform="rotate(22 478 24)"/><ellipse cx="124" cy="54" rx="21" ry="1.5" fill="#d03a6a" opacity="0.39" transform="rotate(26 124 54)"/><ellipse cx="53" cy="71" rx="14" ry="2.8" fill="#d03a6a" opacity="0.42" transform="rotate(29 53 71)"/><ellipse cx="528" cy="25" rx="20" ry="1.3" fill="#9a1e50" opacity="0.50" transform="rotate(5 528 25)"/><ellipse cx="519" cy="225" rx="8" ry="1.5" fill="#e0446e" opacity="0.51" transform="rotate(19 519 225)"/><ellipse cx="452" cy="153" rx="19" ry="2.6" fill="#9a1e50" opacity="0.37" transform="rotate(18 452 153)"/><ellipse cx="416" cy="188" rx="15" ry="3.1" fill="#c0346a" opacity="0.37" transform="rotate(10 416 188)"/><ellipse cx="270" cy="69" rx="25" ry="3.1" fill="#e0446e" opacity="0.40" transform="rotate(14 270 69)"/><ellipse cx="205" cy="62" rx="11" ry="2.3" fill="#d03a6a" opacity="0.53" transform="rotate(37 205 62)"/><ellipse cx="268" cy="131" rx="20" ry="2.8" fill="#8a1848" opacity="0.34" transform="rotate(17 268 131)"/><ellipse cx="124" cy="75" rx="26" ry="2.2" fill="#9a1e50" opacity="0.43" transform="rotate(22 124 75)"/><ellipse cx="275" cy="70" rx="15" ry="2.5" fill="#8a1848" opacity="0.48" transform="rotate(24 275 70)"/><ellipse cx="504" cy="197" rx="9" ry="2.8" fill="#d03a6a" opacity="0.52" transform="rotate(23 504 197)"/><ellipse cx="451" cy="181" rx="24" ry="2.2" fill="#9a1e50" opacity="0.31" transform="rotate(20 451 181)"/><ellipse cx="549" cy="197" rx="9" ry="1.3" fill="#8a1848" opacity="0.34" transform="rotate(22 549 197)"/><ellipse cx="3" cy="119" rx="21" ry="3.0" fill="#d03a6a" opacity="0.29" transform="rotate(27 3 119)"/><ellipse cx="406" cy="146" rx="14" ry="3.3" fill="#9a1e50" opacity="0.55" transform="rotate(15 406 146)"/><ellipse cx="80" cy="76" rx="12" ry="1.7" fill="#d03a6a" opacity="0.44" transform="rotate(29 80 76)"/><ellipse cx="634" cy="193" rx="20" ry="3.3" fill="#e0446e" opacity="0.32" transform="rotate(27 634 193)"/><ellipse cx="70" cy="67" rx="17" ry="2.1" fill="#8a1848" opacity="0.41" transform="rotate(27 70 67)"/><ellipse cx="431" cy="114" rx="12" ry="2.8" fill="#e0446e" opacity="0.52" transform="rotate(19 431 114)"/><ellipse cx="165" cy="139" rx="26" ry="1.6" fill="#c0346a" opacity="0.42" transform="rotate(24 165 139)"/><ellipse cx="252" cy="118" rx="22" ry="2.3" fill="#b02858" opacity="0.38" transform="rotate(25 252 118)"/><ellipse cx="615" cy="199" rx="24" ry="1.4" fill="#9a1e50" opacity="0.38" transform="rotate(21 615 199)"/><ellipse cx="-6" cy="60" rx="8" ry="2.7" fill="#8a1848" opacity="0.55" transform="rotate(28 -6 60)"/><ellipse cx="429" cy="51" rx="21" ry="1.4" fill="#c0346a" opacity="0.27" transform="rotate(18 429 51)"/><ellipse cx="201" cy="107" rx="14" ry="2.9" fill="#9a1e50" opacity="0.41" transform="rotate(19 201 107)"/><ellipse cx="312" cy="76" rx="13" ry="1.3" fill="#c0346a" opacity="0.40" transform="rotate(23 312 76)"/><ellipse cx="72" cy="119" rx="19" ry="2.3" fill="#9a1e50" opacity="0.43" transform="rotate(11 72 119)"/><ellipse cx="63" cy="68" rx="9" ry="1.5" fill="#b02858" opacity="0.29" transform="rotate(31 63 68)"/><ellipse cx="-27" cy="100" rx="23" ry="3.0" fill="#b02858" opacity="0.47" transform="rotate(30 -27 100)"/><ellipse cx="539" cy="190" rx="15" ry="2.8" fill="#d03a6a" opacity="0.48" transform="rotate(26 539 190)"/><ellipse cx="179" cy="107" rx="26" ry="3.0" fill="#8a1848" opacity="0.30" transform="rotate(28 179 107)"/><ellipse cx="127" cy="34" rx="19" ry="3.2" fill="#9a1e50" opacity="0.53" transform="rotate(17 127 34)"/><ellipse cx="613" cy="185" rx="11" ry="2.6" fill="#8a1848" opacity="0.46" transform="rotate(12 613 185)"/><ellipse cx="541" cy="190" rx="24" ry="1.5" fill="#8a1848" opacity="0.51" transform="rotate(9 541 190)"/><ellipse cx="608" cy="223" rx="16" ry="3.0" fill="#c0346a" opacity="0.34" transform="rotate(12 608 223)"/><ellipse cx="388" cy="98" rx="9" ry="1.4" fill="#8a1848" opacity="0.38" transform="rotate(9 388 98)"/><ellipse cx="675" cy="234" rx="24" ry="1.6" fill="#9a1e50" opacity="0.32" transform="rotate(10 675 234)"/><ellipse cx="204" cy="126" rx="26" ry="3.4" fill="#9a1e50" opacity="0.53" transform="rotate(38 204 126)"/><ellipse cx="216" cy="98" rx="11" ry="1.8" fill="#9a1e50" opacity="0.51" transform="rotate(17 216 98)"/><ellipse cx="448" cy="37" rx="10" ry="2.0" fill="#9a1e50" opacity="0.51" transform="rotate(6 448 37)"/><ellipse cx="65" cy="98" rx="9" ry="2.0" fill="#d03a6a" opacity="0.47" transform="rotate(32 65 98)"/><ellipse cx="99" cy="109" rx="22" ry="3.0" fill="#8a1848" opacity="0.41" transform="rotate(16 99 109)"/><ellipse cx="557" cy="193" rx="16" ry="1.7" fill="#b02858" opacity="0.45" transform="rotate(19 557 193)"/><ellipse cx="423" cy="70" rx="19" ry="2.9" fill="#d03a6a" opacity="0.25" transform="rotate(0 423 70)"/><ellipse cx="627" cy="83" rx="21" ry="1.9" fill="#8a1848" opacity="0.46" transform="rotate(32 627 83)"/><ellipse cx="632" cy="13" rx="20" ry="3.0" fill="#8a1848" opacity="0.54" transform="rotate(16 632 13)"/><ellipse cx="611" cy="62" rx="12" ry="1.4" fill="#c0346a" opacity="0.55" transform="rotate(11 611 62)"/><ellipse cx="629" cy="-6" rx="10" ry="1.6" fill="#8a1848" opacity="0.31" transform="rotate(19 629 -6)"/><ellipse cx="76" cy="106" rx="11" ry="2.7" fill="#c0346a" opacity="0.54" transform="rotate(16 76 106)"/><ellipse cx="145" cy="41" rx="19" ry="1.4" fill="#9a1e50" opacity="0.53" transform="rotate(34 145 41)"/><ellipse cx="488" cy="221" rx="16" ry="3.4" fill="#c0346a" opacity="0.57" transform="rotate(6 488 221)"/><ellipse cx="90" cy="70" rx="9" ry="2.7" fill="#c0346a" opacity="0.44" transform="rotate(22 90 70)"/><ellipse cx="462" cy="190" rx="23" ry="1.9" fill="#d03a6a" opacity="0.52" transform="rotate(17 462 190)"/><ellipse cx="477" cy="180" rx="9" ry="1.3" fill="#8a1848" opacity="0.43" transform="rotate(29 477 180)"/><ellipse cx="459" cy="228" rx="21" ry="3.3" fill="#b02858" opacity="0.34" transform="rotate(24 459 228)"/><ellipse cx="652" cy="58" rx="26" ry="2.0" fill="#e0446e" opacity="0.31" transform="rotate(9 652 58)"/><ellipse cx="355" cy="112" rx="27" ry="2.2" fill="#d03a6a" opacity="0.57" transform="rotate(26 355 112)"/><ellipse cx="244" cy="22" rx="8" ry="2.4" fill="#c0346a" opacity="0.56" transform="rotate(18 244 22)"/><ellipse cx="500" cy="181" rx="28" ry="1.5" fill="#c0346a" opacity="0.50" transform="rotate(3 500 181)"/><ellipse cx="157" cy="135" rx="19" ry="2.6" fill="#c0346a" opacity="0.27" transform="rotate(34 157 135)"/><ellipse cx="392" cy="87" rx="11" ry="3.0" fill="#d03a6a" opacity="0.54" transform="rotate(17 392 87)"/><ellipse cx="443" cy="182" rx="26" ry="2.8" fill="#8a1848" opacity="0.26" transform="rotate(8 443 182)"/><ellipse cx="197" cy="124" rx="20" ry="1.5" fill="#8a1848" opacity="0.26" transform="rotate(28 197 124)"/><ellipse cx="137" cy="74" rx="11" ry="2.8" fill="#c0346a" opacity="0.38" transform="rotate(26 137 74)"/><ellipse cx="227" cy="127" rx="25" ry="2.3" fill="#d03a6a" opacity="0.31" transform="rotate(23 227 127)"/><ellipse cx="546" cy="44" rx="8" ry="2.8" fill="#9a1e50" opacity="0.44" transform="rotate(17 546 44)"/><ellipse cx="549" cy="148" rx="13" ry="2.7" fill="#c0346a" opacity="0.56" transform="rotate(14 549 148)"/><ellipse cx="537" cy="53" rx="23" ry="1.8" fill="#8a1848" opacity="0.58" transform="rotate(13 537 53)"/><ellipse cx="704" cy="220" rx="24" ry="3.5" fill="#d03a6a" opacity="0.51" transform="rotate(21 704 220)"/><ellipse cx="617" cy="235" rx="19" ry="1.3" fill="#d03a6a" opacity="0.56" transform="rotate(10 617 235)"/><ellipse cx="382" cy="115" rx="11" ry="1.9" fill="#8a1848" opacity="0.53" transform="rotate(18 382 115)"/><ellipse cx="377" cy="143" rx="23" ry="3.3" fill="#e0446e" opacity="0.38" transform="rotate(10 377 143)"/><ellipse cx="286" cy="52" rx="14" ry="2.2" fill="#e0446e" opacity="0.54" transform="rotate(21 286 52)"/><ellipse cx="43" cy="98" rx="10" ry="1.5" fill="#c0346a" opacity="0.44" transform="rotate(13 43 98)"/><ellipse cx="425" cy="155" rx="27" ry="3.0" fill="#d03a6a" opacity="0.40" transform="rotate(13 425 155)"/><ellipse cx="572" cy="12" rx="12" ry="2.1" fill="#c0346a" opacity="0.29" transform="rotate(26 572 12)"/><ellipse cx="441" cy="102" rx="11" ry="1.8" fill="#9a1e50" opacity="0.36" transform="rotate(14 441 102)"/><ellipse cx="599" cy="227" rx="16" ry="2.6" fill="#e0446e" opacity="0.38" transform="rotate(11 599 227)"/><ellipse cx="328" cy="124" rx="19" ry="3.2" fill="#8a1848" opacity="0.44" transform="rotate(15 328 124)"/><ellipse cx="316" cy="117" rx="23" ry="1.5" fill="#e0446e" opacity="0.34" transform="rotate(13 316 117)"/><ellipse cx="84" cy="93" rx="25" ry="1.5" fill="#8a1848" opacity="0.37" transform="rotate(22 84 93)"/><ellipse cx="433" cy="130" rx="18" ry="3.1" fill="#b02858" opacity="0.55" transform="rotate(19 433 130)"/><ellipse cx="54" cy="130" rx="18" ry="2.0" fill="#c0346a" opacity="0.35" transform="rotate(16 54 130)"/><ellipse cx="425" cy="46" rx="27" ry="1.4" fill="#8a1848" opacity="0.37" transform="rotate(-2 425 46)"/><ellipse cx="384" cy="102" rx="11" ry="2.1" fill="#9a1e50" opacity="0.26" transform="rotate(7 384 102)"/><ellipse cx="492" cy="9" rx="14" ry="2.7" fill="#9a1e50" opacity="0.57" transform="rotate(18 492 9)"/><ellipse cx="110" cy="61" rx="27" ry="2.3" fill="#d03a6a" opacity="0.53" transform="rotate(19 110 61)"/><ellipse cx="504" cy="59" rx="18" ry="3.2" fill="#8a1848" opacity="0.54" transform="rotate(22 504 59)"/><ellipse cx="434" cy="160" rx="20" ry="2.7" fill="#c0346a" opacity="0.34" transform="rotate(23 434 160)"/><ellipse cx="211" cy="98" rx="8" ry="3.3" fill="#c0346a" opacity="0.33" transform="rotate(26 211 98)"/><ellipse cx="328" cy="156" rx="8" ry="1.4" fill="#d03a6a" opacity="0.45" transform="rotate(25 328 156)"/><ellipse cx="222" cy="173" rx="15" ry="2.7" fill="#b02858" opacity="0.42" transform="rotate(35 222 173)"/><ellipse cx="161" cy="136" rx="9" ry="1.8" fill="#e0446e" opacity="0.35" transform="rotate(27 161 136)"/><ellipse cx="458" cy="136" rx="25" ry="2.7" fill="#9a1e50" opacity="0.35" transform="rotate(7 458 136)"/><ellipse cx="475" cy="88" rx="17" ry="1.6" fill="#c0346a" opacity="0.33" transform="rotate(7 475 88)"/><ellipse cx="21" cy="72" rx="8" ry="3.4" fill="#b02858" opacity="0.37" transform="rotate(30 21 72)"/><ellipse cx="282" cy="176" rx="19" ry="3.0" fill="#c0346a" opacity="0.44" transform="rotate(13 282 176)"/><ellipse cx="34" cy="53" rx="10" ry="3.1" fill="#8a1848" opacity="0.37" transform="rotate(31 34 53)"/><ellipse cx="353" cy="116" rx="9" ry="2.7" fill="#8a1848" opacity="0.50" transform="rotate(18 353 116)"/><ellipse cx="436" cy="102" rx="26" ry="1.4" fill="#8a1848" opacity="0.57" transform="rotate(20 436 102)"/><ellipse cx="258" cy="182" rx="21" ry="1.9" fill="#b02858" opacity="0.28" transform="rotate(25 258 182)"/><ellipse cx="426" cy="171" rx="27" ry="3.0" fill="#c0346a" opacity="0.56" transform="rotate(21 426 171)"/><ellipse cx="694" cy="172" rx="20" ry="2.8" fill="#9a1e50" opacity="0.48" transform="rotate(6 694 172)"/><ellipse cx="482" cy="194" rx="25" ry="2.3" fill="#9a1e50" opacity="0.38" transform="rotate(27 482 194)"/><ellipse cx="477" cy="141" rx="25" ry="1.3" fill="#b02858" opacity="0.26" transform="rotate(26 477 141)"/><ellipse cx="284" cy="161" rx="15" ry="2.0" fill="#c0346a" opacity="0.48" transform="rotate(23 284 161)"/><ellipse cx="413" cy="69" rx="17" ry="2.3" fill="#9a1e50" opacity="0.55" transform="rotate(19 413 69)"/><ellipse cx="636" cy="227" rx="17" ry="1.8" fill="#9a1e50" opacity="0.46" transform="rotate(10 636 227)"/><ellipse cx="323" cy="175" rx="20" ry="2.8" fill="#b02858" opacity="0.34" transform="rotate(15 323 175)"/><ellipse cx="315" cy="71" rx="28" ry="2.6" fill="#c0346a" opacity="0.33" transform="rotate(21 315 71)"/><ellipse cx="33" cy="-10" rx="22" ry="1.6" fill="#e0446e" opacity="0.26" transform="rotate(12 33 -10)"/><ellipse cx="256" cy="138" rx="14" ry="2.9" fill="#b02858" opacity="0.44" transform="rotate(28 256 138)"/><ellipse cx="288" cy="192" rx="16" ry="2.1" fill="#b02858" opacity="0.50" transform="rotate(17 288 192)"/><ellipse cx="493" cy="26" rx="13" ry="1.8" fill="#9a1e50" opacity="0.25" transform="rotate(13 493 26)"/><ellipse cx="65" cy="91" rx="9" ry="2.3" fill="#e0446e" opacity="0.42" transform="rotate(28 65 91)"/><ellipse cx="386" cy="188" rx="19" ry="2.3" fill="#9a1e50" opacity="0.44" transform="rotate(31 386 188)"/><ellipse cx="107" cy="79" rx="28" ry="1.7" fill="#b02858" opacity="0.45" transform="rotate(20 107 79)"/><ellipse cx="292" cy="109" rx="23" ry="1.4" fill="#d03a6a" opacity="0.41" transform="rotate(18 292 109)"/><ellipse cx="381" cy="147" rx="14" ry="2.5" fill="#c0346a" opacity="0.46" transform="rotate(24 381 147)"/><ellipse cx="155" cy="67" rx="16" ry="3.4" fill="#9a1e50" opacity="0.34" transform="rotate(26 155 67)"/><ellipse cx="275" cy="172" rx="17" ry="1.6" fill="#c0346a" opacity="0.34" transform="rotate(33 275 172)"/><ellipse cx="435" cy="139" rx="18" ry="3.0" fill="#e0446e" opacity="0.27" transform="rotate(27 435 139)"/><ellipse cx="404" cy="143" rx="23" ry="1.9" fill="#8a1848" opacity="0.49" transform="rotate(20 404 143)"/><ellipse cx="521" cy="228" rx="19" ry="2.4" fill="#b02858" opacity="0.30" transform="rotate(22 521 228)"/><ellipse cx="316" cy="84" rx="28" ry="1.7" fill="#c0346a" opacity="0.24" transform="rotate(2 316 84)"/><ellipse cx="624" cy="220" rx="16" ry="3.0" fill="#d03a6a" opacity="0.40" transform="rotate(19 624 220)"/><ellipse cx="247" cy="223" rx="26" ry="2.3" fill="#8a1848" opacity="0.32" transform="rotate(26 247 223)"/><ellipse cx="521" cy="155" rx="14" ry="3.3" fill="#e0446e" opacity="0.41" transform="rotate(12 521 155)"/><ellipse cx="376" cy="193" rx="9" ry="1.8" fill="#e0446e" opacity="0.33" transform="rotate(20 376 193)"/><ellipse cx="188" cy="13" rx="14" ry="3.1" fill="#9a1e50" opacity="0.25" transform="rotate(33 188 13)"/><ellipse cx="387" cy="124" rx="17" ry="2.4" fill="#b02858" opacity="0.51" transform="rotate(18 387 124)"/><ellipse cx="288" cy="139" rx="20" ry="3.1" fill="#9a1e50" opacity="0.25" transform="rotate(16 288 139)"/><ellipse cx="273" cy="109" rx="11" ry="1.9" fill="#d03a6a" opacity="0.52" transform="rotate(25 273 109)"/><ellipse cx="258" cy="100" rx="19" ry="2.8" fill="#c0346a" opacity="0.42" transform="rotate(20 258 100)"/><ellipse cx="82" cy="57" rx="23" ry="2.0" fill="#e0446e" opacity="0.48" transform="rotate(24 82 57)"/><ellipse cx="451" cy="209" rx="18" ry="2.2" fill="#b02858" opacity="0.52" transform="rotate(13 451 209)"/><ellipse cx="73" cy="55" rx="27" ry="2.0" fill="#c0346a" opacity="0.51" transform="rotate(27 73 55)"/><ellipse cx="311" cy="110" rx="23" ry="1.7" fill="#d03a6a" opacity="0.37" transform="rotate(10 311 110)"/><ellipse cx="489" cy="145" rx="25" ry="2.8" fill="#b02858" opacity="0.37" transform="rotate(15 489 145)"/><ellipse cx="292" cy="143" rx="10" ry="2.8" fill="#8a1848" opacity="0.49" transform="rotate(24 292 143)"/><ellipse cx="76" cy="69" rx="9" ry="2.7" fill="#8a1848" opacity="0.47" transform="rotate(33 76 69)"/><ellipse cx="593" cy="214" rx="10" ry="2.0" fill="#d03a6a" opacity="0.47" transform="rotate(8 593 214)"/><ellipse cx="410" cy="102" rx="24" ry="2.5" fill="#c0346a" opacity="0.47" transform="rotate(8 410 102)"/><ellipse cx="113" cy="143" rx="26" ry="3.0" fill="#e0446e" opacity="0.33" transform="rotate(17 113 143)"/><ellipse cx="339" cy="37" rx="13" ry="3.4" fill="#8a1848" opacity="0.36" transform="rotate(20 339 37)"/><ellipse cx="553" cy="188" rx="24" ry="1.8" fill="#b02858" opacity="0.33" transform="rotate(18 553 188)"/><ellipse cx="192" cy="24" rx="12" ry="2.4" fill="#9a1e50" opacity="0.33" transform="rotate(23 192 24)"/><ellipse cx="113" cy="78" rx="16" ry="2.2" fill="#8a1848" opacity="0.25" transform="rotate(29 113 78)"/><ellipse cx="11" cy="33" rx="14" ry="3.1" fill="#8a1848" opacity="0.42" transform="rotate(21 11 33)"/><ellipse cx="522" cy="11" rx="27" ry="1.8" fill="#8a1848" opacity="0.24" transform="rotate(23 522 11)"/><ellipse cx="287" cy="93" rx="21" ry="2.4" fill="#c0346a" opacity="0.44" transform="rotate(22 287 93)"/><ellipse cx="537" cy="67" rx="17" ry="1.9" fill="#c0346a" opacity="0.56" transform="rotate(6 537 67)"/><ellipse cx="538" cy="163" rx="16" ry="1.5" fill="#b02858" opacity="0.29" transform="rotate(9 538 163)"/><ellipse cx="130" cy="71" rx="10" ry="2.8" fill="#b02858" opacity="0.30" transform="rotate(28 130 71)"/><ellipse cx="275" cy="24" rx="19" ry="2.1" fill="#b02858" opacity="0.24" transform="rotate(33 275 24)"/><ellipse cx="450" cy="220" rx="9" ry="1.3" fill="#8a1848" opacity="0.42" transform="rotate(16 450 220)"/><ellipse cx="404" cy="85" rx="14" ry="2.5" fill="#c0346a" opacity="0.26" transform="rotate(31 404 85)"/><ellipse cx="491" cy="110" rx="23" ry="2.7" fill="#c0346a" opacity="0.55" transform="rotate(8 491 110)"/><ellipse cx="447" cy="155" rx="20" ry="3.3" fill="#d03a6a" opacity="0.44" transform="rotate(14 447 155)"/><ellipse cx="189" cy="84" rx="16" ry="2.1" fill="#e0446e" opacity="0.50" transform="rotate(33 189 84)"/><ellipse cx="219" cy="18" rx="26" ry="2.6" fill="#8a1848" opacity="0.35" transform="rotate(27 219 18)"/><ellipse cx="511" cy="184" rx="23" ry="3.3" fill="#8a1848" opacity="0.28" transform="rotate(19 511 184)"/><ellipse cx="282" cy="54" rx="16" ry="3.4" fill="#b02858" opacity="0.50" transform="rotate(22 282 54)"/><ellipse cx="533" cy="192" rx="25" ry="2.1" fill="#d03a6a" opacity="0.34" transform="rotate(21 533 192)"/><ellipse cx="629" cy="81" rx="21" ry="3.0" fill="#d03a6a" opacity="0.26" transform="rotate(13 629 81)"/><ellipse cx="602" cy="219" rx="15" ry="3.1" fill="#d03a6a" opacity="0.38" transform="rotate(21 602 219)"/><ellipse cx="230" cy="96" rx="12" ry="3.1" fill="#e0446e" opacity="0.41" transform="rotate(46 230 96)"/><ellipse cx="566" cy="130" rx="20" ry="3.3" fill="#e0446e" opacity="0.37" transform="rotate(10 566 130)"/><ellipse cx="576" cy="192" rx="20" ry="2.1" fill="#b02858" opacity="0.53" transform="rotate(28 576 192)"/><ellipse cx="305" cy="137" rx="25" ry="2.9" fill="#e0446e" opacity="0.35" transform="rotate(32 305 137)"/><ellipse cx="330" cy="198" rx="10" ry="2.8" fill="#c0346a" opacity="0.58" transform="rotate(13 330 198)"/><ellipse cx="270" cy="48" rx="19" ry="1.6" fill="#c0346a" opacity="0.56" transform="rotate(32 270 48)"/><ellipse cx="511" cy="168" rx="18" ry="2.2" fill="#c0346a" opacity="0.47" transform="rotate(26 511 168)"/><ellipse cx="643" cy="89" rx="17" ry="2.1" fill="#9a1e50" opacity="0.34" transform="rotate(36 643 89)"/><ellipse cx="403" cy="126" rx="15" ry="2.8" fill="#c0346a" opacity="0.26" transform="rotate(20 403 126)"/><ellipse cx="247" cy="162" rx="24" ry="2.7" fill="#9a1e50" opacity="0.37" transform="rotate(20 247 162)"/><ellipse cx="360" cy="95" rx="11" ry="1.4" fill="#e0446e" opacity="0.39" transform="rotate(18 360 95)"/><ellipse cx="430" cy="134" rx="17" ry="1.5" fill="#b02858" opacity="0.25" transform="rotate(19 430 134)"/><ellipse cx="465" cy="163" rx="21" ry="2.9" fill="#e0446e" opacity="0.31" transform="rotate(18 465 163)"/><ellipse cx="33" cy="109" rx="22" ry="1.7" fill="#9a1e50" opacity="0.36" transform="rotate(35 33 109)"/><ellipse cx="126" cy="144" rx="22" ry="2.0" fill="#9a1e50" opacity="0.42" transform="rotate(23 126 144)"/><ellipse cx="538" cy="203" rx="16" ry="1.9" fill="#d03a6a" opacity="0.41" transform="rotate(14 538 203)"/><ellipse cx="590" cy="155" rx="21" ry="2.0" fill="#8a1848" opacity="0.25" transform="rotate(18 590 155)"/><ellipse cx="506" cy="199" rx="13" ry="3.2" fill="#e0446e" opacity="0.32" transform="rotate(11 506 199)"/><ellipse cx="187" cy="45" rx="20" ry="1.9" fill="#e0446e" opacity="0.36" transform="rotate(32 187 45)"/><ellipse cx="470" cy="43" rx="19" ry="3.0" fill="#c0346a" opacity="0.24" transform="rotate(33 470 43)"/><ellipse cx="458" cy="173" rx="27" ry="3.4" fill="#9a1e50" opacity="0.33" transform="rotate(29 458 173)"/><ellipse cx="427" cy="25" rx="9" ry="1.8" fill="#c0346a" opacity="0.52" transform="rotate(21 427 25)"/><ellipse cx="175" cy="77" rx="9" ry="3.0" fill="#b02858" opacity="0.52" transform="rotate(28 175 77)"/><ellipse cx="115" cy="54" rx="14" ry="1.6" fill="#d03a6a" opacity="0.54" transform="rotate(21 115 54)"/><ellipse cx="664" cy="153" rx="25" ry="1.6" fill="#8a1848" opacity="0.32" transform="rotate(6 664 153)"/><ellipse cx="267" cy="118" rx="24" ry="1.9" fill="#c0346a" opacity="0.34" transform="rotate(26 267 118)"/><ellipse cx="377" cy="93" rx="8" ry="1.8" fill="#b02858" opacity="0.36" transform="rotate(19 377 93)"/><ellipse cx="322" cy="178" rx="14" ry="2.9" fill="#d03a6a" opacity="0.49" transform="rotate(7 322 178)"/><ellipse cx="6" cy="60" rx="16" ry="1.7" fill="#d03a6a" opacity="0.24" transform="rotate(25 6 60)"/><ellipse cx="367" cy="192" rx="24" ry="2.1" fill="#9a1e50" opacity="0.42" transform="rotate(19 367 192)"/><ellipse cx="285" cy="130" rx="25" ry="3.4" fill="#9a1e50" opacity="0.36" transform="rotate(19 285 130)"/><ellipse cx="315" cy="165" rx="16" ry="1.4" fill="#c0346a" opacity="0.44" transform="rotate(10 315 165)"/><ellipse cx="622" cy="225" rx="23" ry="1.6" fill="#d03a6a" opacity="0.35" transform="rotate(10 622 225)"/><ellipse cx="100" cy="44" rx="24" ry="1.3" fill="#9a1e50" opacity="0.55" transform="rotate(24 100 44)"/><ellipse cx="-2" cy="1" rx="12" ry="2.0" fill="#e0446e" opacity="0.54" transform="rotate(27 -2 1)"/><ellipse cx="533" cy="214" rx="17" ry="2.3" fill="#d03a6a" opacity="0.55" transform="rotate(26 533 214)"/><ellipse cx="341" cy="80" rx="14" ry="1.6" fill="#e0446e" opacity="0.35" transform="rotate(17 341 80)"/><ellipse cx="594" cy="199" rx="8" ry="3.2" fill="#9a1e50" opacity="0.44" transform="rotate(16 594 199)"/><ellipse cx="567" cy="190" rx="27" ry="1.8" fill="#d03a6a" opacity="0.39" transform="rotate(8 567 190)"/><ellipse cx="292" cy="145" rx="22" ry="2.1" fill="#e0446e" opacity="0.33" transform="rotate(23 292 145)"/><ellipse cx="445" cy="167" rx="26" ry="2.4" fill="#d03a6a" opacity="0.50" transform="rotate(13 445 167)"/><ellipse cx="270" cy="200" rx="17" ry="2.7" fill="#e0446e" opacity="0.52" transform="rotate(29 270 200)"/><ellipse cx="144" cy="134" rx="22" ry="2.0" fill="#8a1848" opacity="0.41" transform="rotate(19 144 134)"/><ellipse cx="518" cy="-0" rx="25" ry="1.6" fill="#d03a6a" opacity="0.35" transform="rotate(17 518 -0)"/><ellipse cx="465" cy="217" rx="15" ry="2.8" fill="#8a1848" opacity="0.27" transform="rotate(9 465 217)"/><ellipse cx="586" cy="185" rx="17" ry="3.4" fill="#e0446e" opacity="0.56" transform="rotate(14 586 185)"/><ellipse cx="285" cy="120" rx="18" ry="3.5" fill="#c0346a" opacity="0.33" transform="rotate(23 285 120)"/><ellipse cx="568" cy="155" rx="27" ry="1.6" fill="#d03a6a" opacity="0.24" transform="rotate(15 568 155)"/><ellipse cx="356" cy="101" rx="11" ry="1.6" fill="#b02858" opacity="0.33" transform="rotate(20 356 101)"/><ellipse cx="394" cy="93" rx="27" ry="2.1" fill="#e0446e" opacity="0.33" transform="rotate(23 394 93)"/><ellipse cx="642" cy="231" rx="22" ry="2.3" fill="#d03a6a" opacity="0.46" transform="rotate(14 642 231)"/><ellipse cx="656" cy="207" rx="27" ry="3.2" fill="#e0446e" opacity="0.50" transform="rotate(13 656 207)"/><ellipse cx="614" cy="176" rx="15" ry="3.3" fill="#c0346a" opacity="0.29" transform="rotate(7 614 176)"/><ellipse cx="303" cy="94" rx="18" ry="2.6" fill="#e0446e" opacity="0.49" transform="rotate(23 303 94)"/><ellipse cx="617" cy="60" rx="16" ry="3.3" fill="#8a1848" opacity="0.49" transform="rotate(23 617 60)"/><ellipse cx="465" cy="177" rx="19" ry="2.8" fill="#e0446e" opacity="0.44" transform="rotate(21 465 177)"/><ellipse cx="333" cy="146" rx="27" ry="2.4" fill="#c0346a" opacity="0.43" transform="rotate(12 333 146)"/><ellipse cx="44" cy="95" rx="18" ry="3.4" fill="#c0346a" opacity="0.53" transform="rotate(39 44 95)"/><ellipse cx="181" cy="124" rx="15" ry="1.5" fill="#e0446e" opacity="0.43" transform="rotate(33 181 124)"/><ellipse cx="73" cy="65" rx="11" ry="2.2" fill="#c0346a" opacity="0.43" transform="rotate(24 73 65)"/><ellipse cx="417" cy="223" rx="26" ry="1.4" fill="#e0446e" opacity="0.57" transform="rotate(25 417 223)"/><ellipse cx="526" cy="166" rx="25" ry="2.1" fill="#8a1848" opacity="0.49" transform="rotate(24 526 166)"/><ellipse cx="107" cy="24" rx="25" ry="2.1" fill="#e0446e" opacity="0.28" transform="rotate(23 107 24)"/><ellipse cx="312" cy="78" rx="20" ry="1.4" fill="#b02858" opacity="0.47" transform="rotate(26 312 78)"/><ellipse cx="200" cy="128" rx="20" ry="1.8" fill="#8a1848" opacity="0.25" transform="rotate(19 200 128)"/><ellipse cx="622" cy="218" rx="25" ry="2.2" fill="#d03a6a" opacity="0.25" transform="rotate(9 622 218)"/><ellipse cx="412" cy="152" rx="12" ry="2.9" fill="#e0446e" opacity="0.39" transform="rotate(15 412 152)"/><ellipse cx="280" cy="97" rx="13" ry="1.6" fill="#c0346a" opacity="0.28" transform="rotate(32 280 97)"/><ellipse cx="659" cy="217" rx="16" ry="2.1" fill="#b02858" opacity="0.36" transform="rotate(15 659 217)"/><ellipse cx="207" cy="119" rx="12" ry="2.1" fill="#8a1848" opacity="0.47" transform="rotate(29 207 119)"/><ellipse cx="632" cy="35" rx="25" ry="3.0" fill="#c0346a" opacity="0.45" transform="rotate(12 632 35)"/><ellipse cx="57" cy="109" rx="20" ry="3.2" fill="#c0346a" opacity="0.31" transform="rotate(23 57 109)"/><ellipse cx="83" cy="75" rx="25" ry="2.1" fill="#8a1848" opacity="0.52" transform="rotate(31 83 75)"/><ellipse cx="210" cy="167" rx="22" ry="2.5" fill="#c0346a" opacity="0.43" transform="rotate(31 210 167)"/><ellipse cx="66" cy="67" rx="22" ry="2.4" fill="#c0346a" opacity="0.37" transform="rotate(36 66 67)"/><ellipse cx="438" cy="145" rx="26" ry="3.3" fill="#b02858" opacity="0.43" transform="rotate(14 438 145)"/><ellipse cx="177" cy="52" rx="21" ry="2.6" fill="#9a1e50" opacity="0.56" transform="rotate(25 177 52)"/><ellipse cx="223" cy="73" rx="18" ry="3.1" fill="#9a1e50" opacity="0.47" transform="rotate(26 223 73)"/><ellipse cx="126" cy="70" rx="11" ry="1.3" fill="#b02858" opacity="0.38" transform="rotate(37 126 70)"/><ellipse cx="329" cy="172" rx="18" ry="1.8" fill="#c0346a" opacity="0.40" transform="rotate(17 329 172)"/></g>
 <g filter="url(#bl2)" fill="#120a12">
  <ellipse cx="337" cy="252" rx="118" ry="42"/>
  <ellipse cx="337" cy="228" rx="80" ry="22"/>
  <rect x="230" y="250" width="215" height="60"/>
  <circle cx="319" cy="208" r="5"/><circle cx="333" cy="210" r="9"/><circle cx="215" cy="246" r="8"/><circle cx="412" cy="207" r="6"/><circle cx="340" cy="212" r="8"/><circle cx="417" cy="210" r="10"/><circle cx="415" cy="206" r="7"/><circle cx="238" cy="220" r="6"/><circle cx="456" cy="228" r="8"/><circle cx="333" cy="205" r="6"/><circle cx="374" cy="206" r="6"/><circle cx="210" cy="250" r="5"/><circle cx="219" cy="240" r="8"/><circle cx="294" cy="208" r="6"/><circle cx="373" cy="210" r="9"/><circle cx="225" cy="230" r="12"/><circle cx="226" cy="234" r="7"/><circle cx="377" cy="204" r="9"/><circle cx="425" cy="214" r="11"/><circle cx="368" cy="209" r="9"/><circle cx="219" cy="246" r="8"/><circle cx="241" cy="215" r="6"/><circle cx="389" cy="199" r="10"/><circle cx="437" cy="221" r="7"/><circle cx="419" cy="208" r="12"/><circle cx="304" cy="204" r="10"/><circle cx="236" cy="221" r="5"/><circle cx="455" cy="250" r="12"/><circle cx="372" cy="200" r="8"/><circle cx="377" cy="207" r="9"/><circle cx="221" cy="228" r="10"/><circle cx="217" cy="241" r="10"/><circle cx="289" cy="211" r="10"/><circle cx="450" cy="228" r="5"/><circle cx="350" cy="200" r="10"/><circle cx="238" cy="213" r="8"/><circle cx="356" cy="205" r="12"/><circle cx="345" cy="213" r="11"/><circle cx="354" cy="209" r="5"/><circle cx="388" cy="208" r="10"/><circle cx="224" cy="233" r="8"/><circle cx="389" cy="201" r="11"/><circle cx="250" cy="216" r="9"/><circle cx="444" cy="231" r="9"/><circle cx="397" cy="203" r="9"/><circle cx="229" cy="220" r="8"/><circle cx="354" cy="201" r="10"/><circle cx="220" cy="250" r="12"/><circle cx="463" cy="245" r="7"/><circle cx="249" cy="212" r="7"/><circle cx="218" cy="236" r="12"/><circle cx="289" cy="208" r="8"/><circle cx="384" cy="204" r="6"/><circle cx="308" cy="206" r="11"/><circle cx="214" cy="244" r="9"/><circle cx="238" cy="214" r="7"/><circle cx="441" cy="221" r="11"/><circle cx="461" cy="242" r="12"/><circle cx="218" cy="233" r="9"/><circle cx="338" cy="204" r="6"/>
 </g>
 <ellipse cx="338" cy="290" rx="70" ry="25" fill="#c03048" opacity="0.45" filter="url(#bl5)"/>
 <circle cx="338" cy="286" r="24" fill="url(#sun)"/><circle cx="338" cy="277" r="7" fill="#fff" filter="url(#bl2)"/>
</svg>
<div class="a" style="left:0;top:0px;width:675px;font-family:'Liberation Serif',serif;font-weight:bold;font-size:24px;line-height:28px;color:rgba(255,255,255,0.5)">Lorem ipsum dolor sit amet, consectetuer adipiscing elit. Aenean commodo ligula eget dolor. Aenean massa. Cum sociis natoque penatibus et magnis dis parturient montes, nascetur ridiculus mus. Donec quam felis, ultricies nec, pellentesque eu, pretium quis, sem. Nulla consequat massa quis enim. Donec pede justo, fringilla vel, aliquet nec, vulputate eget, arcu. In enim justo, rhoncus ut, imperdiet a, venenatis vitae, justo. Nullam dictum felis eu pede mollis pretium. Integer tincidunt. Cras dapibus. Vivamus elementum semper nisi. Aenean vulputate eleifend tellus. Aenean leo ligula, porttitor eu, consequat vitae, eleifend ac, enim.</div>
</div>
</div>
<!-- magnifier -->
<svg style="left:0;top:0" width="1920" height="1020">
<defs><clipPath id="mcl"><circle cx="552.5" cy="370" r="74"/></clipPath></defs>
<g clip-path="url(#mcl)"><rect x="470.3" y="290.7" width="9" height="9" fill="#321b46"/><rect x="479.3" y="290.7" width="9" height="9" fill="#321b46"/><rect x="488.3" y="290.7" width="9" height="9" fill="#321b46"/><rect x="497.3" y="290.7" width="9" height="9" fill="#321b46"/><rect x="506.3" y="290.7" width="9" height="9" fill="#321b46"/><rect x="515.3" y="290.7" width="9" height="9" fill="#3b1d49"/><rect x="524.3" y="290.7" width="9" height="9" fill="#43204c"/><rect x="533.3" y="290.7" width="9" height="9" fill="#4c224f"/><rect x="542.3" y="290.7" width="9" height="9" fill="#552452"/><rect x="551.3" y="290.7" width="9" height="9" fill="#5e2655"/><rect x="560.3" y="290.7" width="9" height="9" fill="#662858"/><rect x="569.3" y="290.7" width="9" height="9" fill="#662858"/><rect x="578.3" y="290.7" width="9" height="9" fill="#5c2654"/><rect x="587.3" y="290.7" width="9" height="9" fill="#512351"/><rect x="596.3" y="290.7" width="9" height="9" fill="#3c1e4a"/><rect x="605.3" y="290.7" width="9" height="9" fill="#371c48"/><rect x="614.3" y="290.7" width="9" height="9" fill="#321b46"/><rect x="623.3" y="290.7" width="9" height="9" fill="#321b46"/><rect x="470.3" y="299.7" width="9" height="9" fill="#321b46"/><rect x="479.3" y="299.7" width="9" height="9" fill="#321b46"/><rect x="488.3" y="299.7" width="9" height="9" fill="#321b46"/><rect x="497.3" y="299.7" width="9" height="9" fill="#321b46"/><rect x="506.3" y="299.7" width="9" height="9" fill="#321b46"/><rect x="515.3" y="299.7" width="9" height="9" fill="#3b1d49"/><rect x="524.3" y="299.7" width="9" height="9" fill="#43204c"/><rect x="533.3" y="299.7" width="9" height="9" fill="#4c224f"/><rect x="542.3" y="299.7" width="9" height="9" fill="#552452"/><rect x="551.3" y="299.7" width="9" height="9" fill="#5e2655"/><rect x="560.3" y="299.7" width="9" height="9" fill="#662858"/><rect x="569.3" y="299.7" width="9" height="9" fill="#662858"/><rect x="578.3" y="299.7" width="9" height="9" fill="#5c2654"/><rect x="587.3" y="299.7" width="9" height="9" fill="#512351"/><rect x="596.3" y="299.7" width="9" height="9" fill="#3c1e4a"/><rect x="605.3" y="299.7" width="9" height="9" fill="#371c48"/><rect x="614.3" y="299.7" width="9" height="9" fill="#321b46"/><rect x="623.3" y="299.7" width="9" height="9" fill="#321b46"/><rect x="470.3" y="308.7" width="9" height="9" fill="#321b46"/><rect x="479.3" y="308.7" width="9" height="9" fill="#321b46"/><rect x="488.3" y="308.7" width="9" height="9" fill="#321b46"/><rect x="497.3" y="308.7" width="9" height="9" fill="#321b46"/><rect x="506.3" y="308.7" width="9" height="9" fill="#321b46"/><rect x="515.3" y="308.7" width="9" height="9" fill="#5a4a6a"/><rect x="524.3" y="308.7" width="9" height="9" fill="#a8a0b8"/><rect x="533.3" y="308.7" width="9" height="9" fill="#b4a8c4"/><rect x="542.3" y="308.7" width="9" height="9" fill="#b4a8c4"/><rect x="551.3" y="308.7" width="9" height="9" fill="#4a355a"/><rect x="560.3" y="308.7" width="9" height="9" fill="#662858"/><rect x="569.3" y="308.7" width="9" height="9" fill="#662858"/><rect x="578.3" y="308.7" width="9" height="9" fill="#5c2654"/><rect x="587.3" y="308.7" width="9" height="9" fill="#512351"/><rect x="596.3" y="308.7" width="9" height="9" fill="#3c1e4a"/><rect x="605.3" y="308.7" width="9" height="9" fill="#371c48"/><rect x="614.3" y="308.7" width="9" height="9" fill="#321b46"/><rect x="623.3" y="308.7" width="9" height="9" fill="#321b46"/><rect x="470.3" y="317.7" width="9" height="9" fill="#321b46"/><rect x="479.3" y="317.7" width="9" height="9" fill="#321b46"/><rect x="488.3" y="317.7" width="9" height="9" fill="#321b46"/><rect x="497.3" y="317.7" width="9" height="9" fill="#9a8ca8"/><rect x="506.3" y="317.7" width="9" height="9" fill="#a092ac"/><rect x="515.3" y="317.7" width="9" height="9" fill="#4a355a"/><rect x="524.3" y="317.7" width="9" height="9" fill="#a8a0b8"/><rect x="533.3" y="317.7" width="9" height="9" fill="#b4a8c4"/><rect x="542.3" y="317.7" width="9" height="9" fill="#b4a8c4"/><rect x="551.3" y="317.7" width="9" height="9" fill="#5e2655"/><rect x="560.3" y="317.7" width="9" height="9" fill="#662858"/><rect x="569.3" y="317.7" width="9" height="9" fill="#662858"/><rect x="578.3" y="317.7" width="9" height="9" fill="#5c2654"/><rect x="587.3" y="317.7" width="9" height="9" fill="#512351"/><rect x="596.3" y="317.7" width="9" height="9" fill="#3c1e4a"/><rect x="605.3" y="317.7" width="9" height="9" fill="#371c48"/><rect x="614.3" y="317.7" width="9" height="9" fill="#321b46"/><rect x="623.3" y="317.7" width="9" height="9" fill="#321b46"/><rect x="470.3" y="326.7" width="9" height="9" fill="#321b46"/><rect x="479.3" y="326.7" width="9" height="9" fill="#321b46"/><rect x="488.3" y="326.7" width="9" height="9" fill="#321b46"/><rect x="497.3" y="326.7" width="9" height="9" fill="#321b46"/><rect x="506.3" y="326.7" width="9" height="9" fill="#321b46"/><rect x="515.3" y="326.7" width="9" height="9" fill="#3b1d49"/><rect x="524.3" y="326.7" width="9" height="9" fill="#43204c"/><rect x="533.3" y="326.7" width="9" height="9" fill="#605070"/><rect x="542.3" y="326.7" width="9" height="9" fill="#b0a8c0"/><rect x="551.3" y="326.7" width="9" height="9" fill="#5e2655"/><rect x="560.3" y="326.7" width="9" height="9" fill="#662858"/><rect x="569.3" y="326.7" width="9" height="9" fill="#662858"/><rect x="578.3" y="326.7" width="9" height="9" fill="#5c2654"/><rect x="587.3" y="326.7" width="9" height="9" fill="#512351"/><rect x="596.3" y="326.7" width="9" height="9" fill="#3c1e4a"/><rect x="605.3" y="326.7" width="9" height="9" fill="#b898b4"/><rect x="614.3" y="326.7" width="9" height="9" fill="#b898b4"/><rect x="623.3" y="326.7" width="9" height="9" fill="#321b46"/><rect x="470.3" y="335.7" width="9" height="9" fill="#321b46"/><rect x="479.3" y="335.7" width="9" height="9" fill="#321b46"/><rect x="488.3" y="335.7" width="9" height="9" fill="#321b46"/><rect x="497.3" y="335.7" width="9" height="9" fill="#321b46"/><rect x="506.3" y="335.7" width="9" height="9" fill="#321b46"/><rect x="515.3" y="335.7" width="9" height="9" fill="#3b1d49"/><rect x="524.3" y="335.7" width="9" height="9" fill="#43204c"/><rect x="533.3" y="335.7" width="9" height="9" fill="#9a90ac"/><rect x="542.3" y="335.7" width="9" height="9" fill="#807090"/><rect x="551.3" y="335.7" width="9" height="9" fill="#5e2655"/><rect x="560.3" y="335.7" width="9" height="9" fill="#662858"/><rect x="569.3" y="335.7" width="9" height="9" fill="#662858"/><rect x="578.3" y="335.7" width="9" height="9" fill="#5c2654"/><rect x="587.3" y="335.7" width="9" height="9" fill="#512351"/><rect x="596.3" y="335.7" width="9" height="9" fill="#3c1e4a"/><rect x="605.3" y="335.7" width="9" height="9" fill="#b898b4"/><rect x="614.3" y="335.7" width="9" height="9" fill="#c0a8bc"/><rect x="623.3" y="335.7" width="9" height="9" fill="#321b46"/><rect x="470.3" y="344.7" width="9" height="9" fill="#321b46"/><rect x="479.3" y="344.7" width="9" height="9" fill="#321b46"/><rect x="488.3" y="344.7" width="9" height="9" fill="#321b46"/><rect x="497.3" y="344.7" width="9" height="9" fill="#321b46"/><rect x="506.3" y="344.7" width="9" height="9" fill="#321b46"/><rect x="515.3" y="344.7" width="9" height="9" fill="#3b1d49"/><rect x="524.3" y="344.7" width="9" height="9" fill="#6a5878"/><rect x="533.3" y="344.7" width="9" height="9" fill="#706080"/><rect x="542.3" y="344.7" width="9" height="9" fill="#552452"/><rect x="551.3" y="344.7" width="9" height="9" fill="#5e2655"/><rect x="560.3" y="344.7" width="9" height="9" fill="#662858"/><rect x="569.3" y="344.7" width="9" height="9" fill="#662858"/><rect x="578.3" y="344.7" width="9" height="9" fill="#5c2654"/><rect x="587.3" y="344.7" width="9" height="9" fill="#512351"/><rect x="596.3" y="344.7" width="9" height="9" fill="#3c1e4a"/><rect x="605.3" y="344.7" width="9" height="9" fill="#b098b0"/><rect x="614.3" y="344.7" width="9" height="9" fill="#b8a0b8"/><rect x="623.3" y="344.7" width="9" height="9" fill="#321b46"/><rect x="470.3" y="353.7" width="9" height="9" fill="#321b46"/><rect x="479.3" y="353.7" width="9" height="9" fill="#321b46"/><rect x="488.3" y="353.7" width="9" height="9" fill="#321b46"/><rect x="497.3" y="353.7" width="9" height="9" fill="#321b46"/><rect x="506.3" y="353.7" width="9" height="9" fill="#321b46"/><rect x="515.3" y="353.7" width="9" height="9" fill="#3b1d49"/><rect x="524.3" y="353.7" width="9" height="9" fill="#43204c"/><rect x="533.3" y="353.7" width="9" height="9" fill="#4c224f"/><rect x="542.3" y="353.7" width="9" height="9" fill="#552452"/><rect x="551.3" y="353.7" width="9" height="9" fill="#5e2655"/><rect x="560.3" y="353.7" width="9" height="9" fill="#662858"/><rect x="569.3" y="353.7" width="9" height="9" fill="#662858"/><rect x="578.3" y="353.7" width="9" height="9" fill="#5c2654"/><rect x="587.3" y="353.7" width="9" height="9" fill="#512351"/><rect x="596.3" y="353.7" width="9" height="9" fill="#3c1e4a"/><rect x="605.3" y="353.7" width="9" height="9" fill="#5a3560"/><rect x="614.3" y="353.7" width="9" height="9" fill="#5a3862"/><rect x="623.3" y="353.7" width="9" height="9" fill="#503058"/><rect x="470.3" y="362.7" width="9" height="9" fill="#321b46"/><rect x="479.3" y="362.7" width="9" height="9" fill="#321b46"/><rect x="488.3" y="362.7" width="9" height="9" fill="#321b46"/><rect x="497.3" y="362.7" width="9" height="9" fill="#321b46"/><rect x="506.3" y="362.7" width="9" height="9" fill="#321b46"/><rect x="515.3" y="362.7" width="9" height="9" fill="#3b1d49"/><rect x="524.3" y="362.7" width="9" height="9" fill="#43204c"/><rect x="533.3" y="362.7" width="9" height="9" fill="#4c224f"/><rect x="542.3" y="362.7" width="9" height="9" fill="#552452"/><rect x="551.3" y="362.7" width="9" height="9" fill="#5e2655"/><rect x="560.3" y="362.7" width="9" height="9" fill="#662858"/><rect x="569.3" y="362.7" width="9" height="9" fill="#662858"/><rect x="578.3" y="362.7" width="9" height="9" fill="#5c2654"/><rect x="587.3" y="362.7" width="9" height="9" fill="#512351"/><rect x="596.3" y="362.7" width="9" height="9" fill="#47204d"/><rect x="605.3" y="362.7" width="9" height="9" fill="#3c1e4a"/><rect x="614.3" y="362.7" width="9" height="9" fill="#321b46"/><rect x="623.3" y="362.7" width="9" height="9" fill="#321b46"/><rect x="470.3" y="371.7" width="9" height="9" fill="#321b46"/><rect x="479.3" y="371.7" width="9" height="9" fill="#321b46"/><rect x="488.3" y="371.7" width="9" height="9" fill="#321b46"/><rect x="497.3" y="371.7" width="9" height="9" fill="#321b46"/><rect x="506.3" y="371.7" width="9" height="9" fill="#321b46"/><rect x="515.3" y="371.7" width="9" height="9" fill="#3b1d49"/><rect x="524.3" y="371.7" width="9" height="9" fill="#43204c"/><rect x="533.3" y="371.7" width="9" height="9" fill="#4c224f"/><rect x="542.3" y="371.7" width="9" height="9" fill="#552452"/><rect x="551.3" y="371.7" width="9" height="9" fill="#5e2655"/><rect x="560.3" y="371.7" width="9" height="9" fill="#662858"/><rect x="569.3" y="371.7" width="9" height="9" fill="#662858"/><rect x="578.3" y="371.7" width="9" height="9" fill="#5c2654"/><rect x="587.3" y="371.7" width="9" height="9" fill="#512351"/><rect x="596.3" y="371.7" width="9" height="9" fill="#47204d"/><rect x="605.3" y="371.7" width="9" height="9" fill="#3c1e4a"/><rect x="614.3" y="371.7" width="9" height="9" fill="#321b46"/><rect x="623.3" y="371.7" width="9" height="9" fill="#321b46"/><rect x="470.3" y="380.7" width="9" height="9" fill="#321b46"/><rect x="479.3" y="380.7" width="9" height="9" fill="#321b46"/><rect x="488.3" y="380.7" width="9" height="9" fill="#321b46"/><rect x="497.3" y="380.7" width="9" height="9" fill="#321b46"/><rect x="506.3" y="380.7" width="9" height="9" fill="#321b46"/><rect x="515.3" y="380.7" width="9" height="9" fill="#3b1d49"/><rect x="524.3" y="380.7" width="9" height="9" fill="#43204c"/><rect x="533.3" y="380.7" width="9" height="9" fill="#4c224f"/><rect x="542.3" y="380.7" width="9" height="9" fill="#552452"/><rect x="551.3" y="380.7" width="9" height="9" fill="#5e2655"/><rect x="560.3" y="380.7" width="9" height="9" fill="#662858"/><rect x="569.3" y="380.7" width="9" height="9" fill="#662858"/><rect x="578.3" y="380.7" width="9" height="9" fill="#5c2654"/><rect x="587.3" y="380.7" width="9" height="9" fill="#512351"/><rect x="596.3" y="380.7" width="9" height="9" fill="#47204d"/><rect x="605.3" y="380.7" width="9" height="9" fill="#3c1e4a"/><rect x="614.3" y="380.7" width="9" height="9" fill="#321b46"/><rect x="623.3" y="380.7" width="9" height="9" fill="#321b46"/><rect x="470.3" y="389.7" width="9" height="9" fill="#321b46"/><rect x="479.3" y="389.7" width="9" height="9" fill="#321b46"/><rect x="488.3" y="389.7" width="9" height="9" fill="#321b46"/><rect x="497.3" y="389.7" width="9" height="9" fill="#321b46"/><rect x="506.3" y="389.7" width="9" height="9" fill="#321b46"/><rect x="515.3" y="389.7" width="9" height="9" fill="#3b1d49"/><rect x="524.3" y="389.7" width="9" height="9" fill="#43204c"/><rect x="533.3" y="389.7" width="9" height="9" fill="#4c224f"/><rect x="542.3" y="389.7" width="9" height="9" fill="#552452"/><rect x="551.3" y="389.7" width="9" height="9" fill="#5e2655"/><rect x="560.3" y="389.7" width="9" height="9" fill="#662858"/><rect x="569.3" y="389.7" width="9" height="9" fill="#662858"/><rect x="578.3" y="389.7" width="9" height="9" fill="#5c2654"/><rect x="587.3" y="389.7" width="9" height="9" fill="#512351"/><rect x="596.3" y="389.7" width="9" height="9" fill="#47204d"/><rect x="605.3" y="389.7" width="9" height="9" fill="#3c1e4a"/><rect x="614.3" y="389.7" width="9" height="9" fill="#321b46"/><rect x="623.3" y="389.7" width="9" height="9" fill="#321b46"/><rect x="470.3" y="398.7" width="9" height="9" fill="#321b46"/><rect x="479.3" y="398.7" width="9" height="9" fill="#321b46"/><rect x="488.3" y="398.7" width="9" height="9" fill="#321b46"/><rect x="497.3" y="398.7" width="9" height="9" fill="#321b46"/><rect x="506.3" y="398.7" width="9" height="9" fill="#321b46"/><rect x="515.3" y="398.7" width="9" height="9" fill="#3b1d49"/><rect x="524.3" y="398.7" width="9" height="9" fill="#43204c"/><rect x="533.3" y="398.7" width="9" height="9" fill="#4c224f"/><rect x="542.3" y="398.7" width="9" height="9" fill="#552452"/><rect x="551.3" y="398.7" width="9" height="9" fill="#5e2655"/><rect x="560.3" y="398.7" width="9" height="9" fill="#662858"/><rect x="569.3" y="398.7" width="9" height="9" fill="#662858"/><rect x="578.3" y="398.7" width="9" height="9" fill="#5c2654"/><rect x="587.3" y="398.7" width="9" height="9" fill="#512351"/><rect x="596.3" y="398.7" width="9" height="9" fill="#47204d"/><rect x="605.3" y="398.7" width="9" height="9" fill="#3c1e4a"/><rect x="614.3" y="398.7" width="9" height="9" fill="#321b46"/><rect x="623.3" y="398.7" width="9" height="9" fill="#321b46"/><rect x="470.3" y="407.7" width="9" height="9" fill="#321b46"/><rect x="479.3" y="407.7" width="9" height="9" fill="#321b46"/><rect x="488.3" y="407.7" width="9" height="9" fill="#321b46"/><rect x="497.3" y="407.7" width="9" height="9" fill="#321b46"/><rect x="506.3" y="407.7" width="9" height="9" fill="#321b46"/><rect x="515.3" y="407.7" width="9" height="9" fill="#3b1d49"/><rect x="524.3" y="407.7" width="9" height="9" fill="#43204c"/><rect x="533.3" y="407.7" width="9" height="9" fill="#4c224f"/><rect x="542.3" y="407.7" width="9" height="9" fill="#552452"/><rect x="551.3" y="407.7" width="9" height="9" fill="#5e2655"/><rect x="560.3" y="407.7" width="9" height="9" fill="#662858"/><rect x="569.3" y="407.7" width="9" height="9" fill="#662858"/><rect x="578.3" y="407.7" width="9" height="9" fill="#5c2654"/><rect x="587.3" y="407.7" width="9" height="9" fill="#512351"/><rect x="596.3" y="407.7" width="9" height="9" fill="#47204d"/><rect x="605.3" y="407.7" width="9" height="9" fill="#3c1e4a"/><rect x="614.3" y="407.7" width="9" height="9" fill="#321b46"/><rect x="623.3" y="407.7" width="9" height="9" fill="#321b46"/><rect x="470.3" y="416.7" width="9" height="9" fill="#321b46"/><rect x="479.3" y="416.7" width="9" height="9" fill="#321b46"/><rect x="488.3" y="416.7" width="9" height="9" fill="#321b46"/><rect x="497.3" y="416.7" width="9" height="9" fill="#804870"/><rect x="506.3" y="416.7" width="9" height="9" fill="#78406a"/><rect x="515.3" y="416.7" width="9" height="9" fill="#3b1d49"/><rect x="524.3" y="416.7" width="9" height="9" fill="#43204c"/><rect x="533.3" y="416.7" width="9" height="9" fill="#4c224f"/><rect x="542.3" y="416.7" width="9" height="9" fill="#552452"/><rect x="551.3" y="416.7" width="9" height="9" fill="#5e2655"/><rect x="560.3" y="416.7" width="9" height="9" fill="#662858"/><rect x="569.3" y="416.7" width="9" height="9" fill="#662858"/><rect x="578.3" y="416.7" width="9" height="9" fill="#5c2654"/><rect x="587.3" y="416.7" width="9" height="9" fill="#512351"/><rect x="596.3" y="416.7" width="9" height="9" fill="#47204d"/><rect x="605.3" y="416.7" width="9" height="9" fill="#3c1e4a"/><rect x="614.3" y="416.7" width="9" height="9" fill="#321b46"/><rect x="623.3" y="416.7" width="9" height="9" fill="#321b46"/><rect x="470.3" y="425.7" width="9" height="9" fill="#321b46"/><rect x="479.3" y="425.7" width="9" height="9" fill="#321b46"/><rect x="488.3" y="425.7" width="9" height="9" fill="#321b46"/><rect x="497.3" y="425.7" width="9" height="9" fill="#321b46"/><rect x="506.3" y="425.7" width="9" height="9" fill="#a08aa8"/><rect x="515.3" y="425.7" width="9" height="9" fill="#9880a0"/><rect x="524.3" y="425.7" width="9" height="9" fill="#a088a8"/><rect x="533.3" y="425.7" width="9" height="9" fill="#907898"/><rect x="542.3" y="425.7" width="9" height="9" fill="#6a3a68"/><rect x="551.3" y="425.7" width="9" height="9" fill="#5e2655"/><rect x="560.3" y="425.7" width="9" height="9" fill="#662858"/><rect x="569.3" y="425.7" width="9" height="9" fill="#662858"/><rect x="578.3" y="425.7" width="9" height="9" fill="#9a88a6"/><rect x="587.3" y="425.7" width="9" height="9" fill="#9a88a6"/><rect x="596.3" y="425.7" width="9" height="9" fill="#47204d"/><rect x="605.3" y="425.7" width="9" height="9" fill="#3c1e4a"/><rect x="614.3" y="425.7" width="9" height="9" fill="#321b46"/><rect x="623.3" y="425.7" width="9" height="9" fill="#321b46"/><rect x="470.3" y="434.7" width="9" height="9" fill="#321b46"/><rect x="479.3" y="434.7" width="9" height="9" fill="#321b46"/><rect x="488.3" y="434.7" width="9" height="9" fill="#321b46"/><rect x="497.3" y="434.7" width="9" height="9" fill="#321b46"/><rect x="506.3" y="434.7" width="9" height="9" fill="#a088a8"/><rect x="515.3" y="434.7" width="9" height="9" fill="#a88aaa"/><rect x="524.3" y="434.7" width="9" height="9" fill="#b098b0"/><rect x="533.3" y="434.7" width="9" height="9" fill="#a890ac"/><rect x="542.3" y="434.7" width="9" height="9" fill="#7a4870"/><rect x="551.3" y="434.7" width="9" height="9" fill="#5e2655"/><rect x="560.3" y="434.7" width="9" height="9" fill="#662858"/><rect x="569.3" y="434.7" width="9" height="9" fill="#9884a4"/><rect x="578.3" y="434.7" width="9" height="9" fill="#a08ca8"/><rect x="587.3" y="434.7" width="9" height="9" fill="#9a88a6"/><rect x="596.3" y="434.7" width="9" height="9" fill="#47204d"/><rect x="605.3" y="434.7" width="9" height="9" fill="#3c1e4a"/><rect x="614.3" y="434.7" width="9" height="9" fill="#321b46"/><rect x="623.3" y="434.7" width="9" height="9" fill="#321b46"/><rect x="470.3" y="443.7" width="9" height="9" fill="#321b46"/><rect x="479.3" y="443.7" width="9" height="9" fill="#321b46"/><rect x="488.3" y="443.7" width="9" height="9" fill="#321b46"/><rect x="497.3" y="443.7" width="9" height="9" fill="#321b46"/><rect x="506.3" y="443.7" width="9" height="9" fill="#321b46"/><rect x="515.3" y="443.7" width="9" height="9" fill="#3b1d49"/><rect x="524.3" y="443.7" width="9" height="9" fill="#43204c"/><rect x="533.3" y="443.7" width="9" height="9" fill="#4c224f"/><rect x="542.3" y="443.7" width="9" height="9" fill="#552452"/><rect x="551.3" y="443.7" width="9" height="9" fill="#5e2655"/><rect x="560.3" y="443.7" width="9" height="9" fill="#662858"/><rect x="569.3" y="443.7" width="9" height="9" fill="#662858"/><rect x="578.3" y="443.7" width="9" height="9" fill="#5c2654"/><rect x="587.3" y="443.7" width="9" height="9" fill="#512351"/><rect x="596.3" y="443.7" width="9" height="9" fill="#47204d"/><rect x="605.3" y="443.7" width="9" height="9" fill="#3c1e4a"/><rect x="614.3" y="443.7" width="9" height="9" fill="#321b46"/><rect x="623.3" y="443.7" width="9" height="9" fill="#321b46"/>
<path d="M470.3 290.7v162M470.3 290.7h162M479.3 290.7v162M470.3 299.7h162M488.3 290.7v162M470.3 308.7h162M497.3 290.7v162M470.3 317.7h162M506.3 290.7v162M470.3 326.7h162M515.3 290.7v162M470.3 335.7h162M524.3 290.7v162M470.3 344.7h162M533.3 290.7v162M470.3 353.7h162M542.3 290.7v162M470.3 362.7h162M551.3 290.7v162M470.3 371.7h162M560.3 290.7v162M470.3 380.7h162M569.3 290.7v162M470.3 389.7h162M578.3 290.7v162M470.3 398.7h162M587.3 290.7v162M470.3 407.7h162M596.3 290.7v162M470.3 416.7h162M605.3 290.7v162M470.3 425.7h162M614.3 290.7v162M470.3 434.7h162M623.3 290.7v162M470.3 443.7h162M632.3 290.7v162M470.3 452.7h162" stroke="rgba(255,255,255,0.17)" stroke-width="1" fill="none"/>
</g>
<circle cx="552.5" cy="370" r="74.5" fill="none" stroke="#e0dfe3" stroke-width="4"/>
<rect x="550.3" y="370.7" width="11" height="11" fill="none" stroke="#000" stroke-width="3"/>
<rect x="550.3" y="370.7" width="11" height="11" fill="none" stroke="#fff" stroke-width="1.6"/>
</svg>
<div class="a" style="left:432px;top:444px;width:240px;height:35px;background:#e1e1e3;border-radius:4px"></div>
<div class="a" style="left:437px;top:449px;width:26px;height:26px;background:#5d2b4d;border:1.5px solid #fff"></div>
<div class="a" style="left:432px;top:450px;width:240px;padding-left:0;text-align:center;font-size:17.6px;line-height:24px;color:#333336">#5d2b4d</div>
<!-- page scrollbar -->
<div class="a" style="left:1894px;top:169px;width:26px;height:365px;background:#f0f0f0"></div>
<div class="a" style="left:1894px;top:195px;width:26px;height:95px;background:#cdcdcd"></div>
<svg style="left:0;top:0" width="1920" height="540"><path d="M1901.5 186l5.5-8.5l5.5 8.5M1901.5 518.5l5.5 8.5l5.5-8.5" fill="none" stroke="#606060" stroke-width="3.2"/></svg>
<!-- devtools -->
<div class="a" style="left:0;top:534px;width:1920px;height:44px;background:#0c0c0d"></div>
<div class="a" style="left:49px;top:535px;width:131px;height:3px;background:#2f8ef0"></div>
<div class="a" style="left:48px;top:541px;width:1px;height:31px;background:#38383d"></div>
<div class="tabs">
<span style="left:94px;color:#fff">Inspector</span>
<span style="left:225px">Console</span>
<span style="left:346px">Debugger</span>
<span style="left:482px">Network</span>
<span style="left:606px">Style Editor</span>
<span style="left:753px">Performance</span>
<span style="left:911px">Memory</span>
<span style="left:1034px">Storage</span>
<span style="left:1152px">Accessibility</span>
<span style="left:1305px">Application</span>
<span style="left:1452px">DOM</span>
</div>
<!-- toolbars -->
<div class="a" style="left:0;top:578px;width:1920px;height:38px;background:#232327;border-top:1px solid #2b2b30;border-bottom:1px solid #38383d"></div>
<div class="a" style="left:0;top:616px;width:868px;height:366px;background:#232327"></div>
<div class="a" style="left:0;top:982px;width:868px;height:38px;background:#232327;border-top:1px solid #38383d"></div>
<div class="a" style="left:870px;top:616px;width:523px;height:404px;background:#18181a"></div>
<div class="a" style="left:868px;top:578px;width:2px;height:442px;background:#3a3a3f"></div>
<div class="a" style="left:1393px;top:578px;width:2px;height:442px;background:#3a3a3f"></div>
<div class="a" style="left:779px;top:586px;width:1px;height:23px;background:#4a4a4f"></div>
<div class="a" style="left:825px;top:580px;width:39px;height:34px;background:#38383d;border-radius:4px"></div>
<div class="a" style="left:34px;top:588px;font-size:15.6px;line-height:22px;color:#8f8f9d">Search HTML</div>
<div class="a" style="left:904px;top:588px;font-size:15.6px;line-height:22px;color:#8f8f9d">Filter Styles</div>
<div class="a" style="left:1142px;top:588px;font-size:17.7px;line-height:22px;color:#d7d7db">:hov</div>
<div class="a" style="left:1190px;top:588px;font-size:16px;line-height:22px;color:#d7d7db">.cls</div>

<!-- sidebar -->
<div class="a" style="left:1395px;top:578px;width:525px;height:38px;background:#0c0c0d;border-top:1px solid #2b2b30;border-bottom:1px solid #38383d"></div>
<div class="a" style="left:1437px;top:578px;width:86px;height:4px;background:#2f8ef0"></div>
<div class="a" style="left:1898px;top:578px;width:1px;height:36px;background:#38383d"></div>
<div class="a" style="left:1453px;top:586px;font-size:17.5px;line-height:22px;color:#fff">Layout</div>
<div class="a" style="left:1538px;top:586px;font-size:18px;line-height:22px;color:#b1b1b3">Computed</div>
<div class="a" style="left:1655px;top:586px;font-size:16.9px;line-height:22px;color:#b1b1b3">Changes</div>
<div class="a" style="left:1755px;top:586px;font-size:18.3px;line-height:22px;color:#b1b1b3">Compatibility</div>
<div class="a" style="left:1892px;top:586px;width:6px;overflow:hidden;font-size:18px;line-height:22px;color:#b1b1b3">F</div>
<div class="a" style="left:1902px;top:593px;width:0;height:0;border-left:6px solid transparent;border-right:6px solid transparent;border-top:7px solid #b1b1b3"></div>
<!-- layout sections -->
<div class="a" style="left:1395px;top:616px;width:499px;height:404px;background:#18181a"></div>
<div class="a sec" style="top:616px;height:38px"></div>
<div class="a sec" style="top:696px;height:38px"></div>
<div class="a sec" style="top:776px;height:39px"></div>
<div class="a" style="left:1395px;top:653px;width:499px;height:1px;background:#38383d"></div>
<div class="a" style="left:1395px;top:733px;width:499px;height:1px;background:#38383d"></div>
<div class="a" style="left:1395px;top:696px;width:499px;height:1px;background:#38383d"></div>
<div class="a" style="left:1395px;top:776px;width:499px;height:1px;background:#38383d"></div>
<div class="a" style="left:1395px;top:814px;width:499px;height:1px;background:#38383d"></div>
<div class="trid" style="left:1405px;top:631px;border-top-color:#a0a0a4;border-left-width:6.5px;border-right-width:6.5px"></div>
<div class="trid" style="left:1405px;top:711px;border-top-color:#a0a0a4;border-left-width:6.5px;border-right-width:6.5px"></div>
<div class="trid" style="left:1405px;top:792px;border-top-color:#a0a0a4;border-left-width:6.5px;border-right-width:6.5px"></div>
<div class="a" style="left:1425px;top:626px;font-size:17.1px;line-height:22px;color:#d7d7db">Flexbox</div>
<div class="a" style="left:1425px;top:706px;font-size:17.5px;line-height:22px;color:#d7d7db">Grid</div>
<div class="a" style="left:1425px;top:787px;font-size:17.8px;line-height:22px;color:#d7d7db">Box Model</div>
<div class="a" style="left:1425px;top:665px;font-size:17.35px;font-style:italic;line-height:22px;color:#d7d7db">Select a Flex container or item to continue.</div>
<div class="a" style="left:1425px;top:745px;font-size:17.1px;font-style:italic;line-height:22px;color:#d7d7db">CSS Grid is not in use on this page</div>
<!-- sidebar scrollbar -->
<div class="a" style="left:1894px;top:615px;width:26px;height:405px;background:#2e2e31"></div>
<div class="a" style="left:1894px;top:615px;width:26px;height:27px;background:#3a393e"></div>
<div class="a" style="left:1894px;top:642px;width:26px;height:192px;background:#757575"></div>
<svg style="left:0;top:0" width="1920" height="1020"><path d="M1901 633l6-6l6 6M1901 1004.5l6 6l6-6" fill="none" stroke="#fff" stroke-width="3"/></svg>
<!-- box model -->
<div class="a" style="left:1453px;top:851px;width:384px;height:169px;background:#767a4e;border:1px dotted #e8ee9a;border-bottom:none"></div>
<div class="a" style="left:1487px;top:885px;width:317px;height:121px;background:#6852a8;border:6.5px solid #38373f"></div>
<div class="a" style="left:1487px;top:885px;width:66px;height:23px;background:#38373f;border-radius:0 0 6px 0"></div>
<div class="a" style="left:1533px;top:931px;width:225px;height:30px;background:#407da0;border:1px dotted #7fd0f0"></div>
<div class="bm" style="left:1467px;top:859px">margin</div>
<div class="bm" style="left:1493px;top:887px">border</div>
<div class="bm" style="left:1512px;top:910px">padding</div>
<div class="bm" style="left:1638px;top:854px">8</div>
<div class="bmb" style="left:1634px;top:879px">0</div>
<div class="bm" style="left:1638px;top:905px">0</div>
<div class="bm" style="left:1464px;top:937px">8</div>
<div class="bmb" style="left:1482px;top:936px">0</div>
<div class="bm" style="left:1512px;top:937px">0</div>
<div class="bm" style="left:1578px;top:937px">1246.67×660.15</div>
<div class="bm" style="left:1769px;top:937px">0</div>
<div class="bmb" style="left:1790px;top:936px">0</div>
<div class="bm" style="left:1817px;top:937px">8</div>
<div class="bm" style="left:1638px;top:968px">0</div>
<div class="bmb" style="left:1634px;top:994px">0</div>
<!-- devtools icons -->
<svg style="left:0;top:0" width="1920" height="1020" fill="none" stroke="#bfbfc3" stroke-width="2" stroke-linecap="round" stroke-linejoin="round">
 <!-- pick -->
 <path d="M22 566.5h-7a2.5 2.5 0 0 1-2.5-2.5v-15a2.5 2.5 0 0 1 2.5-2.5h18a2.5 2.5 0 0 1 2.5 2.5v7" stroke-width="2.2"/>
 <path d="M24 555l10.5 4.5l-4.3 1.6l3.6 3.6l-1.9 1.9l-3.6-3.6l-1.6 4.3z" fill="#bfbfc3" stroke-width="1"/>
 <!-- inspector -->
 <rect x="65" y="549" width="16" height="16" rx="2.5" stroke="#fff" stroke-width="2.6"/>
 <path d="M73 545.5v3.5M73 565v3.5M61.5 557h3.5M81 557h3.5" stroke="#fff" stroke-width="1.8"/>
 <!-- console -->
 <rect x="193" y="547.5" width="22" height="18.5" rx="3" stroke-width="2.2"/>
 <path d="M198.8 553.5l4.3 4l-4.3 4" stroke-width="1.9"/>
 <!-- debugger -->
 <path d="M317 549h12.5l6.5 8l-6.5 8h-12.5a2.8 2.8 0 0 1-2.8-2.8v-10.4a2.8 2.8 0 0 1 2.8-2.8z" stroke-width="2.2"/>
 <!-- network -->
 <path d="M455 566v-18.5M449.5 553l5.5-5.5l5.5 5.5M468 547.5v18.5M462.5 561l5.5 5.5l5.5-5.5" stroke-width="2.3"/>
 <!-- style editor braces -->
 <path d="M580.5 547.5h-1.5a2.5 2.5 0 0 0-2.5 2.5v4a2.5 2.5 0 0 1-2.5 2.5h0a2.5 2.5 0 0 1 2.5 2.5v4a2.5 2.5 0 0 0 2.5 2.5h1.5" stroke-width="2.6"/>
 <path d="M591.5 547.5h1.5a2.5 2.5 0 0 1 2.5 2.5v4a2.5 2.5 0 0 0 2.5 2.5h0a2.5 2.5 0 0 0-2.5 2.5v4a2.5 2.5 0 0 1-2.5 2.5h-1.5" stroke-width="2.6"/>
 <!-- performance -->
 <path d="M725.5 564a10.6 10.6 0 1 1 16 0" stroke-width="2.6"/>
 <path d="M733 562.5l4-8.5" stroke-width="2"/>
 <circle cx="733" cy="562.5" r="2.6" fill="#bfbfc3" stroke="none"/>
 <!-- memory chip -->
 <rect x="884" y="548" width="12" height="19" rx="2.5" stroke-width="2.4"/>
 <path d="M878.5 550.5l4 1.5M878.5 555.5h4M878.5 560.5h4M878.5 565l4-1.5M901.5 550.5l-4 1.5M901.5 555.5h-4M901.5 560.5h-4M901.5 565l-4-1.5" stroke-width="1.6"/>
 <!-- storage -->
 <rect x="1003.5" y="546" width="19" height="22" rx="3" stroke-width="2.2"/>
 <path d="M1004 557h18M1010.5 551.5h5M1010.5 562.5h5" stroke-width="1.8"/>
 <!-- accessibility -->
 <circle cx="1131" cy="548.5" r="3" fill="#bfbfc3" stroke="none"/>
 <path d="M1121 554h20" stroke-width="2.6"/>
 <path d="M1126.5 554h9v6.5h-1v8h-2.5v-5.5h-2v5.5h-2.5v-8h-1z" fill="#bfbfc3" stroke-width="1"/>
 <!-- application grid -->
 <g stroke-width="1.7">
  <rect x="1274" y="547" width="5" height="5" rx="1"/><rect x="1281.5" y="547" width="5" height="5" rx="1"/><rect x="1289" y="547" width="5" height="5" rx="1"/>
  <rect x="1274" y="554" width="5" height="5" rx="1"/><rect x="1281.5" y="554" width="5" height="5" rx="1"/><rect x="1289" y="554" width="5" height="5" rx="1"/>
  <rect x="1274" y="561" width="5" height="5" rx="1"/><rect x="1281.5" y="561" width="5" height="5" rx="1"/><rect x="1289" y="561" width="5" height="5" rx="1"/>
 </g>
 <!-- DOM -->
 <path d="M1427 547l-7 7l7 7M1434.5 553l7 7l-7 7" stroke-width="2.3"/>
 <!-- responsive -->
 <rect x="1812" y="552" width="9.2" height="16" rx="1.5" stroke-width="1.9"/>
 <path d="M1816 550v-3.2a1.6 1.6 0 0 1 1.6-1.6h13.6a1.6 1.6 0 0 1 1.6 1.6v19.6a1.6 1.6 0 0 1-1.6 1.6h-8" stroke-width="1.9"/>
 <!-- meatball -->
 <circle cx="1853" cy="557" r="2.9" fill="#bfbfc3" stroke="none"/><circle cx="1862" cy="557" r="2.9" fill="#bfbfc3" stroke="none"/><circle cx="1871" cy="557" r="2.9" fill="#bfbfc3" stroke="none"/>
 <!-- close -->
 <path d="M1894.5 550.5l13 13M1907.5 550.5l-13 13" stroke-width="2.2"/>
 <!-- search -->
 <circle cx="19" cy="595" r="6" stroke-width="2"/>
 <path d="M23.5 599.5l6 6" stroke-width="2.2"/>
 <!-- plus -->
 <path d="M802.5 587.5v18M793.5 596.5h18" stroke-width="1.9"/>
 <!-- eyedropper -->
 <g stroke="#75bfff">
  <path d="M849.5 589.5a2.8 2.8 0 0 1 4 4l-3.5 3.5l1 1l-2 2l-6-6l2-2l1 1z" fill="#75bfff" stroke-width="1"/>
  <path d="M844.5 595.5l-8.5 8.5a1.7 1.7 0 0 0 2.5 2.5l8.5-8.5" stroke-width="1.5"/>
 </g>
 <!-- filter funnel -->
 <path d="M883.5 590h15.5l-5.5 7v8.5l-4.5-2.5v-6z" stroke="#8f8f9d" stroke-width="1.6"/>
 <!-- rules plus -->
 <path d="M1243.4 588.5v17.5M1234.6 597.3h17.6" stroke-width="1.9"/>
 <!-- sun -->
 <circle cx="1286" cy="597.7" r="5.6" fill="#bfbfc3" stroke="#bfbfc3" stroke-width="1.2"/>
 <path d="M1286 586.8v1.3M1286 607.3v1.3M1275.1 597.7h1.3M1295.6 597.7h1.3M1278.3 590l0.9 0.9M1292.8 604.5l0.9 0.9M1278.3 605.4l0.9-0.9M1292.8 590.9l0.9-0.9" stroke-width="2.1"/>
 <!-- contrast -->
 <circle cx="1328" cy="597.9" r="9.6" stroke-width="2.2"/>
 <path d="M1328 588.3A9.6 9.6 0 0 1 1328 607.5A3.5 9.6 0 0 1 1328 588.3z" fill="#bfbfc3" stroke="none"/>
 <!-- doc -->
 <path d="M1365 588.3h8.5l5 5v12a2.5 2.5 0 0 1-2.5 2.5h-11a2.5 2.5 0 0 1-2.5-2.5v-14.5a2.5 2.5 0 0 1 2.5-2.5z" stroke-width="2.1"/>
 <path d="M1366.5 598h3M1366.5 601.5h7M1366.5 605h7" stroke-width="1.5"/>
 <!-- sidebar toggle -->
 <rect x="1406.5" y="590" width="19" height="16.5" rx="1" stroke-width="1.8"/>
 <path d="M1420 590v16.5" stroke-width="1.8"/>
 <rect x="1421" y="591" width="4" height="14.5" fill="#5a5a5e" stroke="none"/>
 <path d="M1410 593.5l6.5 4.5l-6.5 4.5z" fill="#bfbfc3" stroke="none"/>
</svg>
<!-- markup -->
<div class="a" style="left:0;top:688px;width:869px;height:24px;background:#204e8a"></div>
<div class="a" style="left:30px;top:715px;width:2px;height:161px;background:#2a5088"></div>
<div class="mk" style="left:26px;top:618px;font-style:italic">&lt;!DOCTYPE html&gt;</div>
<div class="mk" style="left:26px;top:642px">&lt;<span class="tg">html</span>&gt;<span class="bdg">scroll</span></div>
<div class="tri" style="left:28px;top:670px"></div>
<div class="mk dim" style="left:42.6px;top:666px">&lt;head&gt;<span class="ell"></span>&lt;/head&gt;</div>
<div class="trid" style="left:26px;top:697px"></div>
<div class="mk" style="left:42.6px;top:690px;color:#fff">&lt;body&gt;<span class="bdg" style="color:#e0e0e2;border-color:#5e6a7a">overflow</span></div>
<div class="mk" style="left:59px;top:714px">&lt;<span class="tg">h3</span>&gt;<span style="color:#e8e8ea">color: rgba(255, 255, 255, 0.5);</span>&lt;/<span class="tg">h3</span>&gt;</div>
<div class="tri" style="left:45.6px;top:742px"></div>
<div class="mk" style="left:59px;top:738px">&lt;<span class="tg">p</span> <span class="at">class</span>="<span class="av">p_article_1</span>"&gt;<span class="ell"></span>&lt;/<span class="tg">p</span>&gt;<span class="bdg">overflow</span></div>
<div class="mk" style="left:59px;top:762px">&lt;<span class="tg">h3</span>&gt;<span style="color:#e8e8ea">color: rgb(255, 255, 255);</span>&lt;/<span class="tg">h3</span>&gt;<span class="bdg">overflow</span></div>
<div class="tri" style="left:45.6px;top:790px"></div>
<div class="mk" style="left:59px;top:786px">&lt;<span class="tg">p</span> <span class="at">class</span>="<span class="av">p_article_2</span>"&gt;<span class="ell"></span>&lt;/<span class="tg">p</span>&gt;<span class="bdg">overflow</span></div>
<div class="mk cm" style="left:59px;top:810px">&lt;!--Code injected by live-server--&gt;</div>
<div class="tri" style="left:45.6px;top:838px"></div>
<div class="mk dim" style="left:59px;top:834px">&lt;script&gt;<span class="ell"></span>&lt;/script&gt;</div>
<div class="mk" style="left:42.6px;top:858px">&lt;/<span class="tg">body</span>&gt;</div>
<div class="mk" style="left:26px;top:882px">&lt;/<span class="tg">html</span>&gt;</div>
<!-- breadcrumbs -->
<div class="a" style="left:15px;top:991px;font-size:17.4px;line-height:22px;color:#f0f0f2">html</div>
<svg style="left:0;top:0" width="130" height="1020"><path d="M59.5 996.5l4.5 4.5l-4.5 4.5" fill="none" stroke="#b1b1b3" stroke-width="1.6"/></svg>
<div class="a" style="left:77px;top:991px;font-size:17.1px;line-height:22px;color:#75bfff">body</div>
<!-- rules -->
<div class="mk" style="left:876px;top:618px;font-size:15px;color:#d7d7db">element <span style="display:inline-block;width:22px"></span> {</div>
<div class="mk" style="left:876px;top:641px;font-size:15px;color:#d7d7db">}</div>
<svg style="left:0;top:0" width="1000" height="700"><g fill="#939395"><rect x="951.5" y="622.5" width="3" height="3"/><rect x="957" y="622.5" width="3" height="3"/><rect x="962.5" y="622.5" width="3" height="3"/><rect x="951.5" y="628" width="3" height="3"/><rect x="962.5" y="628" width="3" height="3"/><rect x="951.5" y="633.5" width="3" height="3"/><rect x="957" y="633.5" width="3" height="3"/><rect x="962.5" y="633.5" width="3" height="3"/></g></svg>
<div class="mk" style="left:1335px;top:618px;font-size:15px;color:#939395">inline</div>
</body></html>
